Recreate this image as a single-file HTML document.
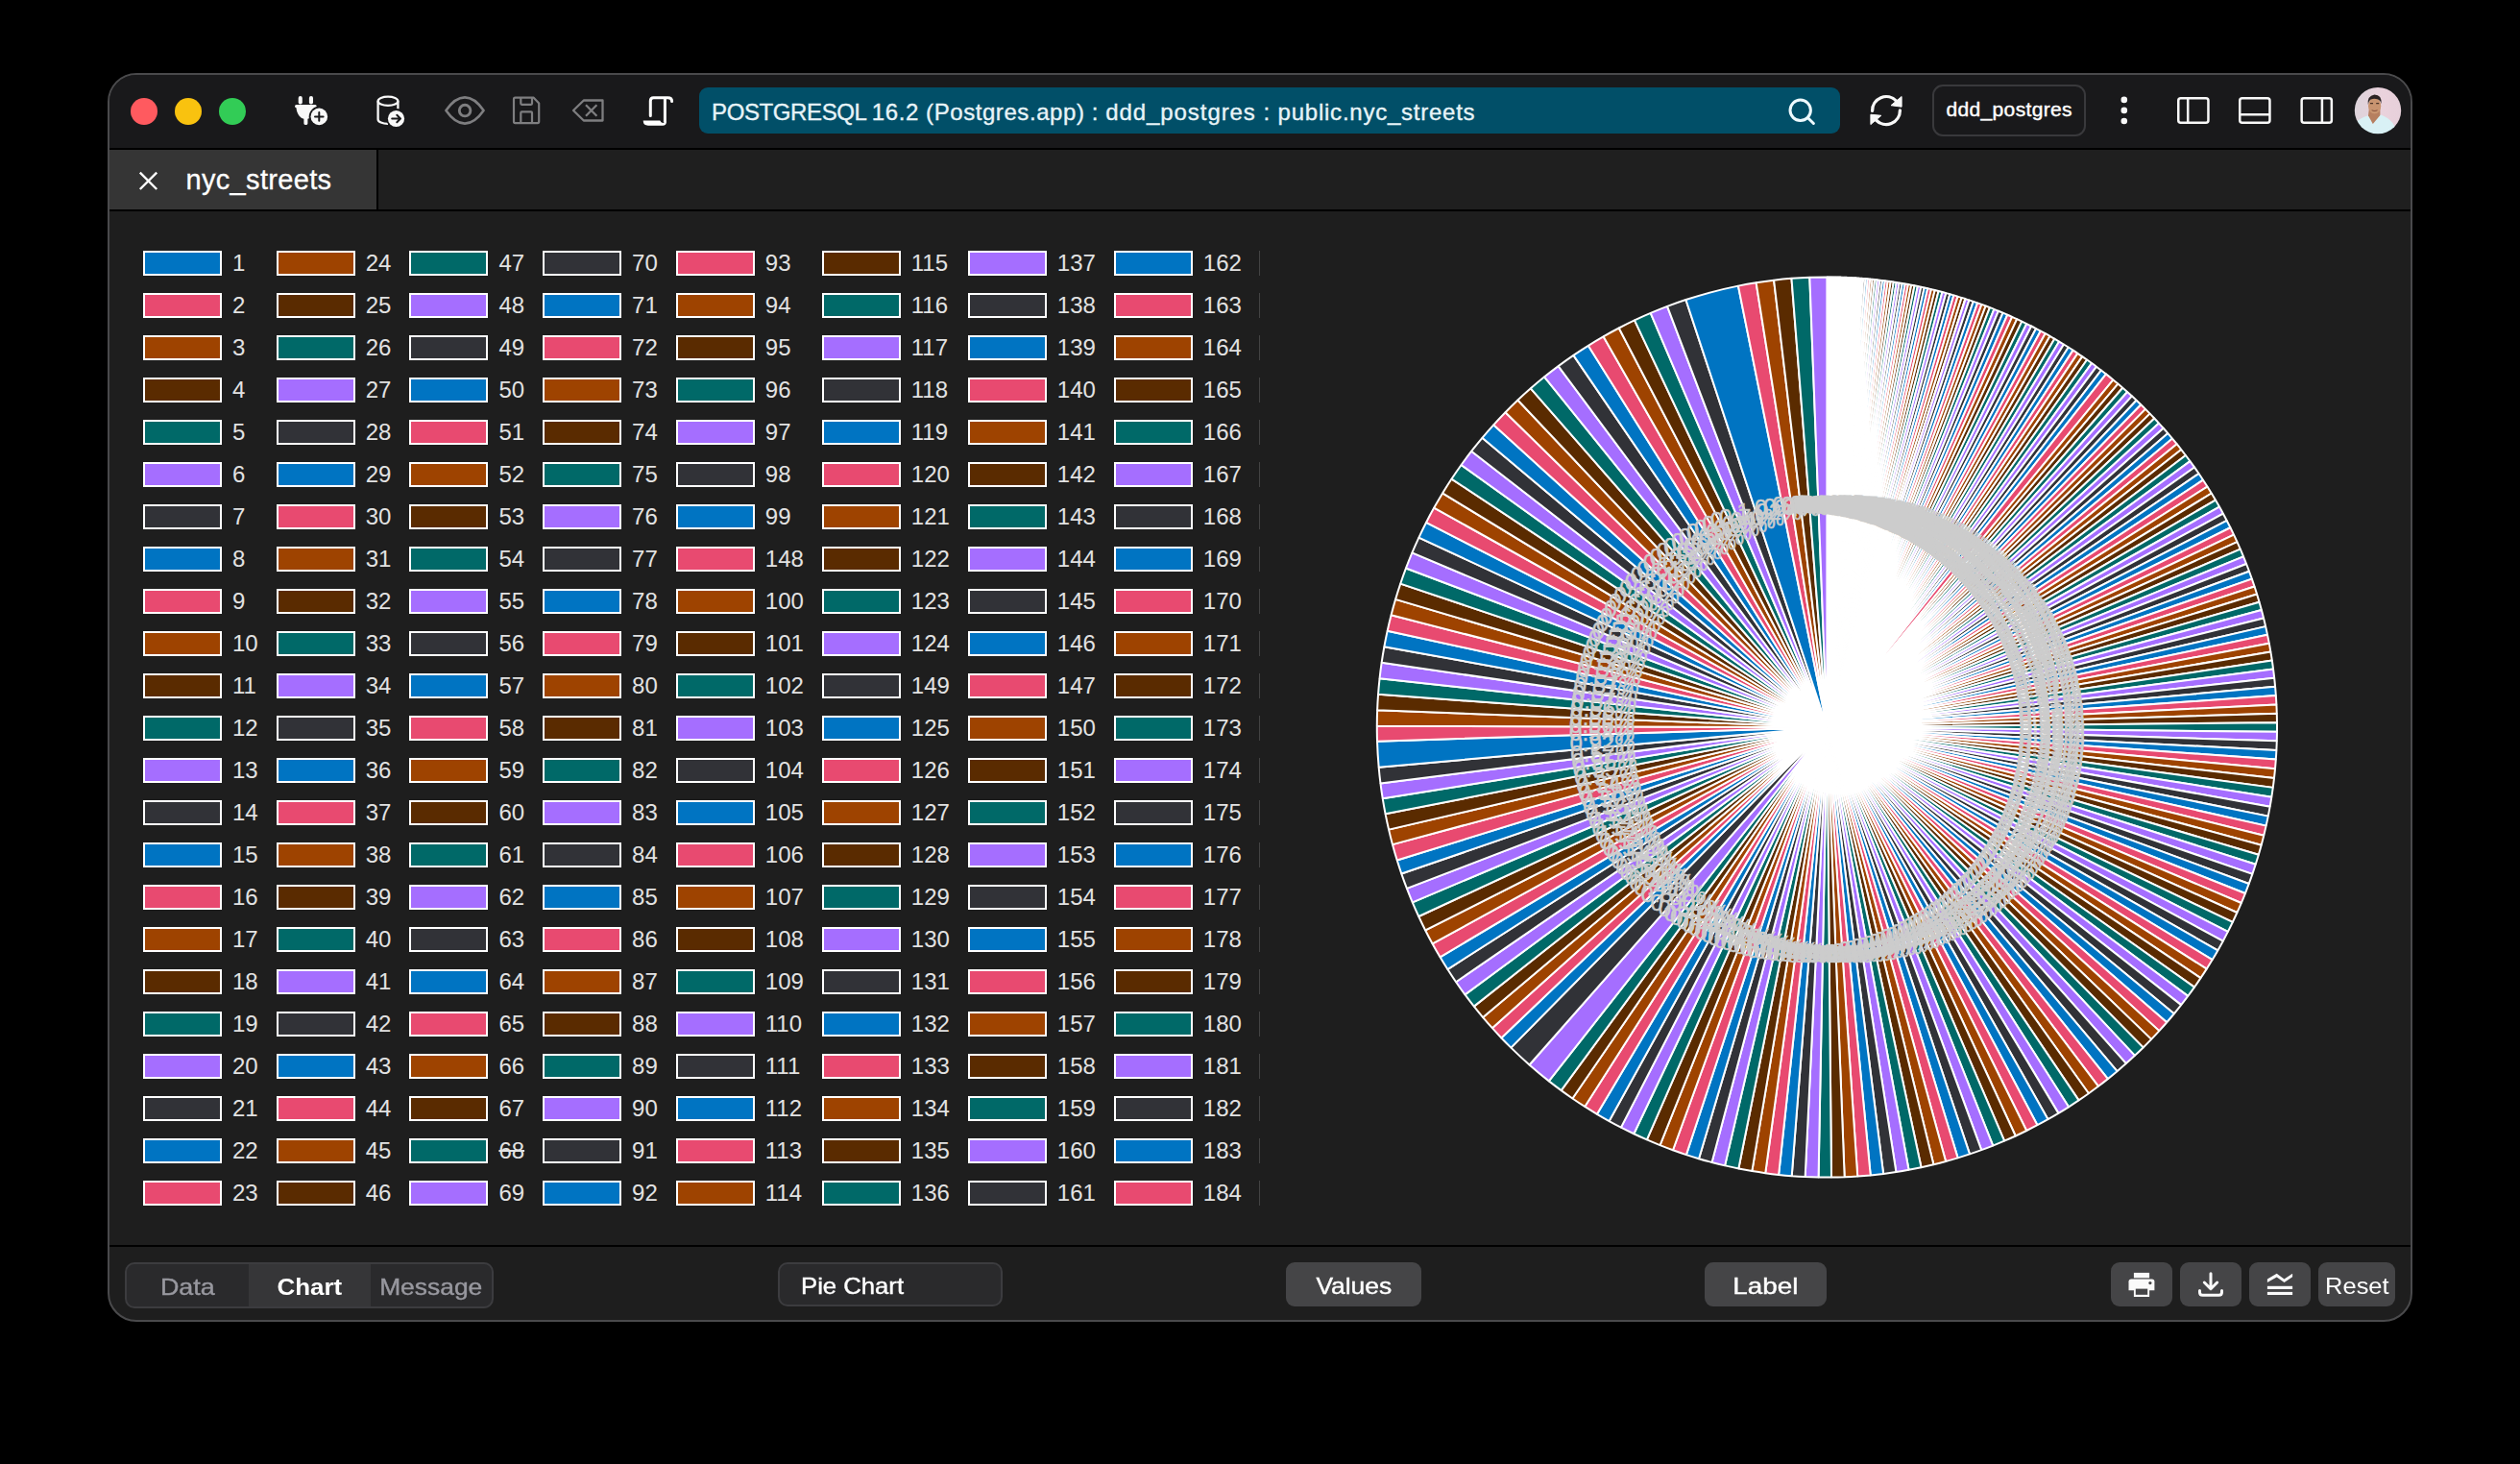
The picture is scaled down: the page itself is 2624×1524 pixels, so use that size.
<!DOCTYPE html><html><head><meta charset="utf-8"><title>nyc_streets</title><style>
.sx{display:inline-block;}

html,body{margin:0;padding:0;background:#000;}
body{width:2624px;height:1524px;position:relative;overflow:hidden;font-family:"Liberation Sans",sans-serif;}
.abs{position:absolute;}
#win{position:absolute;left:112px;top:76px;width:2396px;height:1296px;border:2px solid #4a4a4c;border-radius:30px;background:#1e1e1e;overflow:hidden;}
#tb{position:absolute;left:0;top:0;width:2396px;height:76px;background:#19191b;}
.hl{position:absolute;left:0;width:2396px;height:2px;background:#000;}
#tabbar{position:absolute;left:0;top:78px;width:2396px;height:62px;background:#1f1f1f;}
#tab{position:absolute;left:0;top:0;width:278px;height:62px;background:#353535;}
#tabdiv{position:absolute;left:278px;top:0;width:2px;height:62px;background:#000;}
.tl{position:absolute;top:24px;width:28px;height:28px;border-radius:50%;}
#addr{position:absolute;left:613.5px;top:13px;width:1188.5px;height:48px;border-radius:9px;background:#014f68;}
#addr i{font-style:normal}
#addr span{position:absolute;left:13.6px;top:0;line-height:51px;font-size:24px;color:#e8f4f8;white-space:nowrap;letter-spacing:0.57px;-webkit-text-stroke:0.35px #e8f4f8;}
#dbbtn{position:absolute;left:1898px;top:10px;width:156px;height:50px;border:2px solid #39393c;border-radius:11px;}
#dbbtn span{position:absolute;left:0.2px;width:156px;text-align:center;top:0;line-height:48px;font-size:21px;color:#fff;white-space:nowrap;letter-spacing:0.35px;-webkit-text-stroke:0.4px #fff;}
.lg{position:absolute;width:78px;height:22px;border:2px solid #fff;}
.lt{position:absolute;font-size:24px;line-height:26px;color:#e2e2e2;white-space:nowrap;}
.tick{position:absolute;left:1197.3px;width:1px;height:26px;background:#434343;}
.btn{position:absolute;top:1236px;height:46px;border-radius:9px;background:#454547;color:#fff;font-size:24px;line-height:49px;text-align:center;white-space:nowrap;}
#seg{position:absolute;left:16px;top:1236px;width:380px;height:44px;border:2px solid #3c3c3f;border-radius:10px;background:#2a2a2c;overflow:hidden;}
#seg div{position:absolute;top:0;height:44px;line-height:48px;font-size:24px;text-align:center;color:#98989f;white-space:nowrap;}
#sel{position:absolute;left:696px;top:1236px;width:230px;height:42px;border:2px solid #3c3c3f;border-radius:10px;background:#2a2a2c;}
#sel span{position:absolute;left:22px;top:0;line-height:45px;-webkit-text-stroke:0.4px #fff;transform-origin:0 50%;transform:scaleX(1.07);display:inline-block;font-size:24px;color:#fff;white-space:nowrap;}
</style></head><body>
<div id="win">
<div id="tb">
<div class="tl" style="left:22px;background:#ff5a5f"></div>
<div class="tl" style="left:68px;background:#f9c20f"></div>
<div class="tl" style="left:114px;background:#32cc56"></div>
<div id="addr"><span><i style="letter-spacing:-0.4px">POSTGRESQL </i>16.2 (Postgres.app) : <i style="letter-spacing:0.93px">ddd_postgres : </i><i style="letter-spacing:0.76px">public.nyc_streets</i></span></div>
<div id="dbbtn"><span>ddd_postgres</span></div>
<svg class="abs" style="left:0;top:0" width="2396" height="76" viewBox="114 78 2396 76" fill="none">
<g fill="#f8f8f8">
<rect x="310.7" y="99.9" width="4.1" height="8.6" rx="2"/><rect x="321.9" y="99.9" width="4.1" height="8.6" rx="2"/>
<path d="M307 110.6Q307 109 308.6 109H328.1Q329.7 109 329.7 110.6Q329.7 112 328.3 112.3C328 118.5 324.5 122.8 320.4 123.8V128.4Q320.4 130 318.4 130Q316.4 130 316.4 128.4V123.8C312.3 122.8 309 118.5 308.5 112.3Q307 112 307 110.6Z"/>
</g>
<circle cx="332.3" cy="121.4" r="10.6" fill="#19191b"/><circle cx="332.3" cy="121.4" r="8.8" fill="#f8f8f8"/>
<path d="M328 121.4H336.6M332.3 117.1V125.7" stroke="#19191b" stroke-width="2" stroke-linecap="round"/>
<g stroke="#f8f8f8" stroke-width="2.3">
<ellipse cx="404" cy="105.3" rx="10.4" ry="4.6"/>
<path d="M393.6 105.3V124.3A10.4 4.6 0 0 0 404 128.9M414.4 105.3V113.5"/>
</g>
<circle cx="412.5" cy="123.5" r="10.4" fill="#19191b"/><circle cx="412.5" cy="123.5" r="8.6" fill="#f8f8f8"/>
<path d="M408.2 123.5H416.6M413.3 119.8L417 123.5L413.3 127.2" stroke="#19191b" stroke-width="2" stroke-linecap="round" stroke-linejoin="round"/>
<g stroke="#7e7e80" stroke-width="2.6" stroke-linejoin="round">
<path d="M464.4 115C471 105.5 477 101.4 484 101.4C491 101.4 497 105.5 503.6 115C497 124.5 491 128.6 484 128.6C477 128.6 471 124.5 464.4 115Z"/>
<circle cx="484.1" cy="115.1" r="5.8" stroke-width="2.9"/>
</g>
<g stroke="#7e7e80" stroke-width="2.2" stroke-linejoin="round">
<path d="M536.5 101.7H555.7L561.2 107.4V126.6Q561.2 128.1 559.7 128.1H536.5Q535 128.1 535 126.6V103.2Q535 101.7 536.5 101.7Z"/>
<path d="M542.3 101.7V107.8Q542.3 108.8 543.3 108.8H553Q554 108.8 554 107.8V101.7M542.3 128.1V117.4Q542.3 116.4 543.3 116.4H553Q554 116.4 554 117.4V128.1"/>
</g>
<g stroke="#7e7e80" stroke-width="2.3" stroke-linejoin="round">
<path d="M597 115L607.8 104.5H627.5V125.5H607.8Z"/><path d="M610 109.3L621.4 120.7M621.4 109.3L610 120.7"/>
</g>
<g stroke="#fff" stroke-width="3" stroke-linecap="round" stroke-linejoin="round">
<path d="M677.3 120.5V105Q677.3 101.8 680.5 101.8H695.4Q699.6 101.8 699.6 105.6"/>
<path d="M692.4 102.5V126.5"/>
</g>
<path d="M669.7 125.6H687.3Q688 128 690.4 128Q692.4 128 693.9 126V126.8Q693.9 130.8 689.9 130.8H674.9Q669.7 130.8 669.7 125.6Z" fill="#fff"/>
<g stroke="#eefaff" stroke-width="3" stroke-linecap="round"><circle cx="1874.7" cy="114.8" r="10.7"/><path d="M1882.6 122.7L1888.4 128.5"/></g>
<g stroke="#f8f8f8" stroke-width="3.3" stroke-linecap="round">
<path d="M1949.6 115.4A14.4 14.4 0 0 1 1974.5 105.2"/><path d="M1978.4 115A14.4 14.4 0 0 1 1953.5 125"/>
</g>
<path d="M1980.1 100.5V111.2L1969 109.7Z M1947.9 129.6V119.2L1958.9 120.3Z" fill="#f8f8f8" stroke="#f8f8f8" stroke-width="1" stroke-linejoin="round"/>
<g fill="#f8f8f8"><circle cx="2211.8" cy="103.9" r="3.3"/><circle cx="2211.8" cy="114.9" r="3.3"/><circle cx="2211.8" cy="126" r="3.3"/></g>
<g stroke="#f8f8f8" stroke-width="2.5">
<rect x="2268.25" y="102.25" width="31.2" height="25.4" rx="2.5"/><path d="M2278.2 102.25V127.65"/>
<rect x="2332.25" y="102.25" width="31.2" height="25.4" rx="2.5"/><path d="M2332.25 119.2H2363.45"/>
<rect x="2396.65" y="102.25" width="31.2" height="25.4" rx="2.5"/><path d="M2417.9 102.25V127.65"/>
</g>
<defs><clipPath id="av"><circle cx="2476" cy="115.1" r="24.2"/></clipPath>
<linearGradient id="avbg" x1="0" y1="0" x2="1" y2="0"><stop offset="0" stop-color="#dcd3da"/><stop offset="0.6" stop-color="#ead2dc"/><stop offset="1" stop-color="#e6d0da"/></linearGradient></defs>
<filter id="avb" x="-10%" y="-10%" width="120%" height="120%"><feGaussianBlur stdDeviation="0.45"/></filter>
<g clip-path="url(#av)"><g filter="url(#avb)">
<rect x="2450" y="89" width="52" height="52" fill="url(#avbg)"/>
<path d="M2451 141V129Q2457 122.8 2466 120.2L2470.8 129L2477 118.8Q2486.5 122 2491.5 128Q2494.5 133 2495.5 141Z" fill="#d9f1f5"/>
<path d="M2467 112H2478.4V120L2470.8 129L2466 120.2Z" fill="#b67f60"/>
<ellipse cx="2472.6" cy="110.2" rx="6.6" ry="8.4" fill="#c8946f"/>
<path d="M2465.8 109Q2464.6 100 2472.4 98.6Q2480.4 98.8 2479.7 108.5Q2478.8 104 2475.5 103.2Q2472 102.2 2468.8 103.4Q2466.6 104.6 2465.8 109Z" fill="#2a2221"/>
<path d="M2468 107.6H2471M2474.2 107.6H2477.2" stroke="#4a3226" stroke-width="1.3"/>
<path d="M2469.6 114.6Q2472.6 116.4 2475.6 114.6" stroke="#8a5540" stroke-width="1.1" fill="none"/>
</g></g>
</svg>
</div>
<div class="hl" style="top:76px"></div>
<div id="tabbar"><div id="tab"></div><div id="tabdiv"></div>
<svg class="abs" style="left:0;top:0" width="278" height="62" viewBox="0 0 278 62"><path d="M31.8 23.6L49.2 41M49.2 23.6L31.8 41" stroke="#fff" stroke-width="2.4" fill="none"/></svg>
<span class="abs" id="tabtxt" style="left:79.5px;top:0;line-height:63px;font-size:29px;color:#fff;white-space:nowrap;letter-spacing:0.33px;-webkit-text-stroke:0.3px #fff">nyc_streets</span>
</div>
<div class="hl" style="top:140px"></div>
<div class="lg" style="left:35.0px;top:183px;background:#0074c2"></div>
<div class="lt" style="left:128.0px;top:183px">1</div>
<div class="lg" style="left:35.0px;top:227px;background:#e84a70"></div>
<div class="lt" style="left:128.0px;top:227px">2</div>
<div class="lg" style="left:35.0px;top:271px;background:#9e4300"></div>
<div class="lt" style="left:128.0px;top:271px">3</div>
<div class="lg" style="left:35.0px;top:315px;background:#5a2b00"></div>
<div class="lt" style="left:128.0px;top:315px">4</div>
<div class="lg" style="left:35.0px;top:359px;background:#006968"></div>
<div class="lt" style="left:128.0px;top:359px">5</div>
<div class="lg" style="left:35.0px;top:403px;background:#a56eff"></div>
<div class="lt" style="left:128.0px;top:403px">6</div>
<div class="lg" style="left:35.0px;top:447px;background:#313237"></div>
<div class="lt" style="left:128.0px;top:447px">7</div>
<div class="lg" style="left:35.0px;top:491px;background:#0074c2"></div>
<div class="lt" style="left:128.0px;top:491px">8</div>
<div class="lg" style="left:35.0px;top:535px;background:#e84a70"></div>
<div class="lt" style="left:128.0px;top:535px">9</div>
<div class="lg" style="left:35.0px;top:579px;background:#9e4300"></div>
<div class="lt" style="left:128.0px;top:579px">10</div>
<div class="lg" style="left:35.0px;top:623px;background:#5a2b00"></div>
<div class="lt" style="left:128.0px;top:623px">11</div>
<div class="lg" style="left:35.0px;top:667px;background:#006968"></div>
<div class="lt" style="left:128.0px;top:667px">12</div>
<div class="lg" style="left:35.0px;top:711px;background:#a56eff"></div>
<div class="lt" style="left:128.0px;top:711px">13</div>
<div class="lg" style="left:35.0px;top:755px;background:#313237"></div>
<div class="lt" style="left:128.0px;top:755px">14</div>
<div class="lg" style="left:35.0px;top:799px;background:#0074c2"></div>
<div class="lt" style="left:128.0px;top:799px">15</div>
<div class="lg" style="left:35.0px;top:843px;background:#e84a70"></div>
<div class="lt" style="left:128.0px;top:843px">16</div>
<div class="lg" style="left:35.0px;top:887px;background:#9e4300"></div>
<div class="lt" style="left:128.0px;top:887px">17</div>
<div class="lg" style="left:35.0px;top:931px;background:#5a2b00"></div>
<div class="lt" style="left:128.0px;top:931px">18</div>
<div class="lg" style="left:35.0px;top:975px;background:#006968"></div>
<div class="lt" style="left:128.0px;top:975px">19</div>
<div class="lg" style="left:35.0px;top:1019px;background:#a56eff"></div>
<div class="lt" style="left:128.0px;top:1019px">20</div>
<div class="lg" style="left:35.0px;top:1063px;background:#313237"></div>
<div class="lt" style="left:128.0px;top:1063px">21</div>
<div class="lg" style="left:35.0px;top:1107px;background:#0074c2"></div>
<div class="lt" style="left:128.0px;top:1107px">22</div>
<div class="lg" style="left:35.0px;top:1151px;background:#e84a70"></div>
<div class="lt" style="left:128.0px;top:1151px">23</div>
<div class="lg" style="left:173.7px;top:183px;background:#9e4300"></div>
<div class="lt" style="left:266.7px;top:183px">24</div>
<div class="lg" style="left:173.7px;top:227px;background:#5a2b00"></div>
<div class="lt" style="left:266.7px;top:227px">25</div>
<div class="lg" style="left:173.7px;top:271px;background:#006968"></div>
<div class="lt" style="left:266.7px;top:271px">26</div>
<div class="lg" style="left:173.7px;top:315px;background:#a56eff"></div>
<div class="lt" style="left:266.7px;top:315px">27</div>
<div class="lg" style="left:173.7px;top:359px;background:#313237"></div>
<div class="lt" style="left:266.7px;top:359px">28</div>
<div class="lg" style="left:173.7px;top:403px;background:#0074c2"></div>
<div class="lt" style="left:266.7px;top:403px">29</div>
<div class="lg" style="left:173.7px;top:447px;background:#e84a70"></div>
<div class="lt" style="left:266.7px;top:447px">30</div>
<div class="lg" style="left:173.7px;top:491px;background:#9e4300"></div>
<div class="lt" style="left:266.7px;top:491px">31</div>
<div class="lg" style="left:173.7px;top:535px;background:#5a2b00"></div>
<div class="lt" style="left:266.7px;top:535px">32</div>
<div class="lg" style="left:173.7px;top:579px;background:#006968"></div>
<div class="lt" style="left:266.7px;top:579px">33</div>
<div class="lg" style="left:173.7px;top:623px;background:#a56eff"></div>
<div class="lt" style="left:266.7px;top:623px">34</div>
<div class="lg" style="left:173.7px;top:667px;background:#313237"></div>
<div class="lt" style="left:266.7px;top:667px">35</div>
<div class="lg" style="left:173.7px;top:711px;background:#0074c2"></div>
<div class="lt" style="left:266.7px;top:711px">36</div>
<div class="lg" style="left:173.7px;top:755px;background:#e84a70"></div>
<div class="lt" style="left:266.7px;top:755px">37</div>
<div class="lg" style="left:173.7px;top:799px;background:#9e4300"></div>
<div class="lt" style="left:266.7px;top:799px">38</div>
<div class="lg" style="left:173.7px;top:843px;background:#5a2b00"></div>
<div class="lt" style="left:266.7px;top:843px">39</div>
<div class="lg" style="left:173.7px;top:887px;background:#006968"></div>
<div class="lt" style="left:266.7px;top:887px">40</div>
<div class="lg" style="left:173.7px;top:931px;background:#a56eff"></div>
<div class="lt" style="left:266.7px;top:931px">41</div>
<div class="lg" style="left:173.7px;top:975px;background:#313237"></div>
<div class="lt" style="left:266.7px;top:975px">42</div>
<div class="lg" style="left:173.7px;top:1019px;background:#0074c2"></div>
<div class="lt" style="left:266.7px;top:1019px">43</div>
<div class="lg" style="left:173.7px;top:1063px;background:#e84a70"></div>
<div class="lt" style="left:266.7px;top:1063px">44</div>
<div class="lg" style="left:173.7px;top:1107px;background:#9e4300"></div>
<div class="lt" style="left:266.7px;top:1107px">45</div>
<div class="lg" style="left:173.7px;top:1151px;background:#5a2b00"></div>
<div class="lt" style="left:266.7px;top:1151px">46</div>
<div class="lg" style="left:312.4px;top:183px;background:#006968"></div>
<div class="lt" style="left:405.4px;top:183px">47</div>
<div class="lg" style="left:312.4px;top:227px;background:#a56eff"></div>
<div class="lt" style="left:405.4px;top:227px">48</div>
<div class="lg" style="left:312.4px;top:271px;background:#313237"></div>
<div class="lt" style="left:405.4px;top:271px">49</div>
<div class="lg" style="left:312.4px;top:315px;background:#0074c2"></div>
<div class="lt" style="left:405.4px;top:315px">50</div>
<div class="lg" style="left:312.4px;top:359px;background:#e84a70"></div>
<div class="lt" style="left:405.4px;top:359px">51</div>
<div class="lg" style="left:312.4px;top:403px;background:#9e4300"></div>
<div class="lt" style="left:405.4px;top:403px">52</div>
<div class="lg" style="left:312.4px;top:447px;background:#5a2b00"></div>
<div class="lt" style="left:405.4px;top:447px">53</div>
<div class="lg" style="left:312.4px;top:491px;background:#006968"></div>
<div class="lt" style="left:405.4px;top:491px">54</div>
<div class="lg" style="left:312.4px;top:535px;background:#a56eff"></div>
<div class="lt" style="left:405.4px;top:535px">55</div>
<div class="lg" style="left:312.4px;top:579px;background:#313237"></div>
<div class="lt" style="left:405.4px;top:579px">56</div>
<div class="lg" style="left:312.4px;top:623px;background:#0074c2"></div>
<div class="lt" style="left:405.4px;top:623px">57</div>
<div class="lg" style="left:312.4px;top:667px;background:#e84a70"></div>
<div class="lt" style="left:405.4px;top:667px">58</div>
<div class="lg" style="left:312.4px;top:711px;background:#9e4300"></div>
<div class="lt" style="left:405.4px;top:711px">59</div>
<div class="lg" style="left:312.4px;top:755px;background:#5a2b00"></div>
<div class="lt" style="left:405.4px;top:755px">60</div>
<div class="lg" style="left:312.4px;top:799px;background:#006968"></div>
<div class="lt" style="left:405.4px;top:799px">61</div>
<div class="lg" style="left:312.4px;top:843px;background:#a56eff"></div>
<div class="lt" style="left:405.4px;top:843px">62</div>
<div class="lg" style="left:312.4px;top:887px;background:#313237"></div>
<div class="lt" style="left:405.4px;top:887px">63</div>
<div class="lg" style="left:312.4px;top:931px;background:#0074c2"></div>
<div class="lt" style="left:405.4px;top:931px">64</div>
<div class="lg" style="left:312.4px;top:975px;background:#e84a70"></div>
<div class="lt" style="left:405.4px;top:975px">65</div>
<div class="lg" style="left:312.4px;top:1019px;background:#9e4300"></div>
<div class="lt" style="left:405.4px;top:1019px">66</div>
<div class="lg" style="left:312.4px;top:1063px;background:#5a2b00"></div>
<div class="lt" style="left:405.4px;top:1063px">67</div>
<div class="lg" style="left:312.4px;top:1107px;background:#006968"></div>
<div class="lt" style="left:405.4px;top:1107px;text-decoration:line-through">68</div>
<div class="lg" style="left:312.4px;top:1151px;background:#a56eff"></div>
<div class="lt" style="left:405.4px;top:1151px">69</div>
<div class="lg" style="left:451.1px;top:183px;background:#313237"></div>
<div class="lt" style="left:544.1px;top:183px">70</div>
<div class="lg" style="left:451.1px;top:227px;background:#0074c2"></div>
<div class="lt" style="left:544.1px;top:227px">71</div>
<div class="lg" style="left:451.1px;top:271px;background:#e84a70"></div>
<div class="lt" style="left:544.1px;top:271px">72</div>
<div class="lg" style="left:451.1px;top:315px;background:#9e4300"></div>
<div class="lt" style="left:544.1px;top:315px">73</div>
<div class="lg" style="left:451.1px;top:359px;background:#5a2b00"></div>
<div class="lt" style="left:544.1px;top:359px">74</div>
<div class="lg" style="left:451.1px;top:403px;background:#006968"></div>
<div class="lt" style="left:544.1px;top:403px">75</div>
<div class="lg" style="left:451.1px;top:447px;background:#a56eff"></div>
<div class="lt" style="left:544.1px;top:447px">76</div>
<div class="lg" style="left:451.1px;top:491px;background:#313237"></div>
<div class="lt" style="left:544.1px;top:491px">77</div>
<div class="lg" style="left:451.1px;top:535px;background:#0074c2"></div>
<div class="lt" style="left:544.1px;top:535px">78</div>
<div class="lg" style="left:451.1px;top:579px;background:#e84a70"></div>
<div class="lt" style="left:544.1px;top:579px">79</div>
<div class="lg" style="left:451.1px;top:623px;background:#9e4300"></div>
<div class="lt" style="left:544.1px;top:623px">80</div>
<div class="lg" style="left:451.1px;top:667px;background:#5a2b00"></div>
<div class="lt" style="left:544.1px;top:667px">81</div>
<div class="lg" style="left:451.1px;top:711px;background:#006968"></div>
<div class="lt" style="left:544.1px;top:711px">82</div>
<div class="lg" style="left:451.1px;top:755px;background:#a56eff"></div>
<div class="lt" style="left:544.1px;top:755px">83</div>
<div class="lg" style="left:451.1px;top:799px;background:#313237"></div>
<div class="lt" style="left:544.1px;top:799px">84</div>
<div class="lg" style="left:451.1px;top:843px;background:#0074c2"></div>
<div class="lt" style="left:544.1px;top:843px">85</div>
<div class="lg" style="left:451.1px;top:887px;background:#e84a70"></div>
<div class="lt" style="left:544.1px;top:887px">86</div>
<div class="lg" style="left:451.1px;top:931px;background:#9e4300"></div>
<div class="lt" style="left:544.1px;top:931px">87</div>
<div class="lg" style="left:451.1px;top:975px;background:#5a2b00"></div>
<div class="lt" style="left:544.1px;top:975px">88</div>
<div class="lg" style="left:451.1px;top:1019px;background:#006968"></div>
<div class="lt" style="left:544.1px;top:1019px">89</div>
<div class="lg" style="left:451.1px;top:1063px;background:#a56eff"></div>
<div class="lt" style="left:544.1px;top:1063px">90</div>
<div class="lg" style="left:451.1px;top:1107px;background:#313237"></div>
<div class="lt" style="left:544.1px;top:1107px">91</div>
<div class="lg" style="left:451.1px;top:1151px;background:#0074c2"></div>
<div class="lt" style="left:544.1px;top:1151px">92</div>
<div class="lg" style="left:589.8px;top:183px;background:#e84a70"></div>
<div class="lt" style="left:682.8px;top:183px">93</div>
<div class="lg" style="left:589.8px;top:227px;background:#9e4300"></div>
<div class="lt" style="left:682.8px;top:227px">94</div>
<div class="lg" style="left:589.8px;top:271px;background:#5a2b00"></div>
<div class="lt" style="left:682.8px;top:271px">95</div>
<div class="lg" style="left:589.8px;top:315px;background:#006968"></div>
<div class="lt" style="left:682.8px;top:315px">96</div>
<div class="lg" style="left:589.8px;top:359px;background:#a56eff"></div>
<div class="lt" style="left:682.8px;top:359px">97</div>
<div class="lg" style="left:589.8px;top:403px;background:#313237"></div>
<div class="lt" style="left:682.8px;top:403px">98</div>
<div class="lg" style="left:589.8px;top:447px;background:#0074c2"></div>
<div class="lt" style="left:682.8px;top:447px">99</div>
<div class="lg" style="left:589.8px;top:491px;background:#e84a70"></div>
<div class="lt" style="left:682.8px;top:491px">148</div>
<div class="lg" style="left:589.8px;top:535px;background:#9e4300"></div>
<div class="lt" style="left:682.8px;top:535px">100</div>
<div class="lg" style="left:589.8px;top:579px;background:#5a2b00"></div>
<div class="lt" style="left:682.8px;top:579px">101</div>
<div class="lg" style="left:589.8px;top:623px;background:#006968"></div>
<div class="lt" style="left:682.8px;top:623px">102</div>
<div class="lg" style="left:589.8px;top:667px;background:#a56eff"></div>
<div class="lt" style="left:682.8px;top:667px">103</div>
<div class="lg" style="left:589.8px;top:711px;background:#313237"></div>
<div class="lt" style="left:682.8px;top:711px">104</div>
<div class="lg" style="left:589.8px;top:755px;background:#0074c2"></div>
<div class="lt" style="left:682.8px;top:755px">105</div>
<div class="lg" style="left:589.8px;top:799px;background:#e84a70"></div>
<div class="lt" style="left:682.8px;top:799px">106</div>
<div class="lg" style="left:589.8px;top:843px;background:#9e4300"></div>
<div class="lt" style="left:682.8px;top:843px">107</div>
<div class="lg" style="left:589.8px;top:887px;background:#5a2b00"></div>
<div class="lt" style="left:682.8px;top:887px">108</div>
<div class="lg" style="left:589.8px;top:931px;background:#006968"></div>
<div class="lt" style="left:682.8px;top:931px">109</div>
<div class="lg" style="left:589.8px;top:975px;background:#a56eff"></div>
<div class="lt" style="left:682.8px;top:975px">110</div>
<div class="lg" style="left:589.8px;top:1019px;background:#313237"></div>
<div class="lt" style="left:682.8px;top:1019px">111</div>
<div class="lg" style="left:589.8px;top:1063px;background:#0074c2"></div>
<div class="lt" style="left:682.8px;top:1063px">112</div>
<div class="lg" style="left:589.8px;top:1107px;background:#e84a70"></div>
<div class="lt" style="left:682.8px;top:1107px">113</div>
<div class="lg" style="left:589.8px;top:1151px;background:#9e4300"></div>
<div class="lt" style="left:682.8px;top:1151px">114</div>
<div class="lg" style="left:741.8px;top:183px;background:#5a2b00"></div>
<div class="lt" style="left:834.8px;top:183px">115</div>
<div class="lg" style="left:741.8px;top:227px;background:#006968"></div>
<div class="lt" style="left:834.8px;top:227px">116</div>
<div class="lg" style="left:741.8px;top:271px;background:#a56eff"></div>
<div class="lt" style="left:834.8px;top:271px">117</div>
<div class="lg" style="left:741.8px;top:315px;background:#313237"></div>
<div class="lt" style="left:834.8px;top:315px">118</div>
<div class="lg" style="left:741.8px;top:359px;background:#0074c2"></div>
<div class="lt" style="left:834.8px;top:359px">119</div>
<div class="lg" style="left:741.8px;top:403px;background:#e84a70"></div>
<div class="lt" style="left:834.8px;top:403px">120</div>
<div class="lg" style="left:741.8px;top:447px;background:#9e4300"></div>
<div class="lt" style="left:834.8px;top:447px">121</div>
<div class="lg" style="left:741.8px;top:491px;background:#5a2b00"></div>
<div class="lt" style="left:834.8px;top:491px">122</div>
<div class="lg" style="left:741.8px;top:535px;background:#006968"></div>
<div class="lt" style="left:834.8px;top:535px">123</div>
<div class="lg" style="left:741.8px;top:579px;background:#a56eff"></div>
<div class="lt" style="left:834.8px;top:579px">124</div>
<div class="lg" style="left:741.8px;top:623px;background:#313237"></div>
<div class="lt" style="left:834.8px;top:623px">149</div>
<div class="lg" style="left:741.8px;top:667px;background:#0074c2"></div>
<div class="lt" style="left:834.8px;top:667px">125</div>
<div class="lg" style="left:741.8px;top:711px;background:#e84a70"></div>
<div class="lt" style="left:834.8px;top:711px">126</div>
<div class="lg" style="left:741.8px;top:755px;background:#9e4300"></div>
<div class="lt" style="left:834.8px;top:755px">127</div>
<div class="lg" style="left:741.8px;top:799px;background:#5a2b00"></div>
<div class="lt" style="left:834.8px;top:799px">128</div>
<div class="lg" style="left:741.8px;top:843px;background:#006968"></div>
<div class="lt" style="left:834.8px;top:843px">129</div>
<div class="lg" style="left:741.8px;top:887px;background:#a56eff"></div>
<div class="lt" style="left:834.8px;top:887px">130</div>
<div class="lg" style="left:741.8px;top:931px;background:#313237"></div>
<div class="lt" style="left:834.8px;top:931px">131</div>
<div class="lg" style="left:741.8px;top:975px;background:#0074c2"></div>
<div class="lt" style="left:834.8px;top:975px">132</div>
<div class="lg" style="left:741.8px;top:1019px;background:#e84a70"></div>
<div class="lt" style="left:834.8px;top:1019px">133</div>
<div class="lg" style="left:741.8px;top:1063px;background:#9e4300"></div>
<div class="lt" style="left:834.8px;top:1063px">134</div>
<div class="lg" style="left:741.8px;top:1107px;background:#5a2b00"></div>
<div class="lt" style="left:834.8px;top:1107px">135</div>
<div class="lg" style="left:741.8px;top:1151px;background:#006968"></div>
<div class="lt" style="left:834.8px;top:1151px">136</div>
<div class="lg" style="left:893.8px;top:183px;background:#a56eff"></div>
<div class="lt" style="left:986.8px;top:183px">137</div>
<div class="lg" style="left:893.8px;top:227px;background:#313237"></div>
<div class="lt" style="left:986.8px;top:227px">138</div>
<div class="lg" style="left:893.8px;top:271px;background:#0074c2"></div>
<div class="lt" style="left:986.8px;top:271px">139</div>
<div class="lg" style="left:893.8px;top:315px;background:#e84a70"></div>
<div class="lt" style="left:986.8px;top:315px">140</div>
<div class="lg" style="left:893.8px;top:359px;background:#9e4300"></div>
<div class="lt" style="left:986.8px;top:359px">141</div>
<div class="lg" style="left:893.8px;top:403px;background:#5a2b00"></div>
<div class="lt" style="left:986.8px;top:403px">142</div>
<div class="lg" style="left:893.8px;top:447px;background:#006968"></div>
<div class="lt" style="left:986.8px;top:447px">143</div>
<div class="lg" style="left:893.8px;top:491px;background:#a56eff"></div>
<div class="lt" style="left:986.8px;top:491px">144</div>
<div class="lg" style="left:893.8px;top:535px;background:#313237"></div>
<div class="lt" style="left:986.8px;top:535px">145</div>
<div class="lg" style="left:893.8px;top:579px;background:#0074c2"></div>
<div class="lt" style="left:986.8px;top:579px">146</div>
<div class="lg" style="left:893.8px;top:623px;background:#e84a70"></div>
<div class="lt" style="left:986.8px;top:623px">147</div>
<div class="lg" style="left:893.8px;top:667px;background:#9e4300"></div>
<div class="lt" style="left:986.8px;top:667px">150</div>
<div class="lg" style="left:893.8px;top:711px;background:#5a2b00"></div>
<div class="lt" style="left:986.8px;top:711px">151</div>
<div class="lg" style="left:893.8px;top:755px;background:#006968"></div>
<div class="lt" style="left:986.8px;top:755px">152</div>
<div class="lg" style="left:893.8px;top:799px;background:#a56eff"></div>
<div class="lt" style="left:986.8px;top:799px">153</div>
<div class="lg" style="left:893.8px;top:843px;background:#313237"></div>
<div class="lt" style="left:986.8px;top:843px">154</div>
<div class="lg" style="left:893.8px;top:887px;background:#0074c2"></div>
<div class="lt" style="left:986.8px;top:887px">155</div>
<div class="lg" style="left:893.8px;top:931px;background:#e84a70"></div>
<div class="lt" style="left:986.8px;top:931px">156</div>
<div class="lg" style="left:893.8px;top:975px;background:#9e4300"></div>
<div class="lt" style="left:986.8px;top:975px">157</div>
<div class="lg" style="left:893.8px;top:1019px;background:#5a2b00"></div>
<div class="lt" style="left:986.8px;top:1019px">158</div>
<div class="lg" style="left:893.8px;top:1063px;background:#006968"></div>
<div class="lt" style="left:986.8px;top:1063px">159</div>
<div class="lg" style="left:893.8px;top:1107px;background:#a56eff"></div>
<div class="lt" style="left:986.8px;top:1107px">160</div>
<div class="lg" style="left:893.8px;top:1151px;background:#313237"></div>
<div class="lt" style="left:986.8px;top:1151px">161</div>
<div class="lg" style="left:1045.8px;top:183px;background:#0074c2"></div>
<div class="lt" style="left:1138.8px;top:183px">162</div>
<div class="lg" style="left:1045.8px;top:227px;background:#e84a70"></div>
<div class="lt" style="left:1138.8px;top:227px">163</div>
<div class="lg" style="left:1045.8px;top:271px;background:#9e4300"></div>
<div class="lt" style="left:1138.8px;top:271px">164</div>
<div class="lg" style="left:1045.8px;top:315px;background:#5a2b00"></div>
<div class="lt" style="left:1138.8px;top:315px">165</div>
<div class="lg" style="left:1045.8px;top:359px;background:#006968"></div>
<div class="lt" style="left:1138.8px;top:359px">166</div>
<div class="lg" style="left:1045.8px;top:403px;background:#a56eff"></div>
<div class="lt" style="left:1138.8px;top:403px">167</div>
<div class="lg" style="left:1045.8px;top:447px;background:#313237"></div>
<div class="lt" style="left:1138.8px;top:447px">168</div>
<div class="lg" style="left:1045.8px;top:491px;background:#0074c2"></div>
<div class="lt" style="left:1138.8px;top:491px">169</div>
<div class="lg" style="left:1045.8px;top:535px;background:#e84a70"></div>
<div class="lt" style="left:1138.8px;top:535px">170</div>
<div class="lg" style="left:1045.8px;top:579px;background:#9e4300"></div>
<div class="lt" style="left:1138.8px;top:579px">171</div>
<div class="lg" style="left:1045.8px;top:623px;background:#5a2b00"></div>
<div class="lt" style="left:1138.8px;top:623px">172</div>
<div class="lg" style="left:1045.8px;top:667px;background:#006968"></div>
<div class="lt" style="left:1138.8px;top:667px">173</div>
<div class="lg" style="left:1045.8px;top:711px;background:#a56eff"></div>
<div class="lt" style="left:1138.8px;top:711px">174</div>
<div class="lg" style="left:1045.8px;top:755px;background:#313237"></div>
<div class="lt" style="left:1138.8px;top:755px">175</div>
<div class="lg" style="left:1045.8px;top:799px;background:#0074c2"></div>
<div class="lt" style="left:1138.8px;top:799px">176</div>
<div class="lg" style="left:1045.8px;top:843px;background:#e84a70"></div>
<div class="lt" style="left:1138.8px;top:843px">177</div>
<div class="lg" style="left:1045.8px;top:887px;background:#9e4300"></div>
<div class="lt" style="left:1138.8px;top:887px">178</div>
<div class="lg" style="left:1045.8px;top:931px;background:#5a2b00"></div>
<div class="lt" style="left:1138.8px;top:931px">179</div>
<div class="lg" style="left:1045.8px;top:975px;background:#006968"></div>
<div class="lt" style="left:1138.8px;top:975px">180</div>
<div class="lg" style="left:1045.8px;top:1019px;background:#a56eff"></div>
<div class="lt" style="left:1138.8px;top:1019px">181</div>
<div class="lg" style="left:1045.8px;top:1063px;background:#313237"></div>
<div class="lt" style="left:1138.8px;top:1063px">182</div>
<div class="lg" style="left:1045.8px;top:1107px;background:#0074c2"></div>
<div class="lt" style="left:1138.8px;top:1107px">183</div>
<div class="lg" style="left:1045.8px;top:1151px;background:#e84a70"></div>
<div class="lt" style="left:1138.8px;top:1151px">184</div>
<div class="tick" style="top:183px"></div>
<div class="tick" style="top:227px"></div>
<div class="tick" style="top:271px"></div>
<div class="tick" style="top:315px"></div>
<div class="tick" style="top:359px"></div>
<div class="tick" style="top:403px"></div>
<div class="tick" style="top:447px"></div>
<div class="tick" style="top:491px"></div>
<div class="tick" style="top:535px"></div>
<div class="tick" style="top:579px"></div>
<div class="tick" style="top:623px"></div>
<div class="tick" style="top:667px"></div>
<div class="tick" style="top:711px"></div>
<div class="tick" style="top:755px"></div>
<div class="tick" style="top:799px"></div>
<div class="tick" style="top:843px"></div>
<div class="tick" style="top:887px"></div>
<div class="tick" style="top:931px"></div>
<div class="tick" style="top:975px"></div>
<div class="tick" style="top:1019px"></div>
<div class="tick" style="top:1063px"></div>
<div class="tick" style="top:1107px"></div>
<div class="tick" style="top:1151px"></div>
<svg class="abs" style="left:1286px;top:182px" width="1000" height="1000" viewBox="1400 260 1000 1000">
<g stroke="#fff" stroke-width="2" stroke-linejoin="bevel">
<path fill="#0074c2" d="M1902.4 757.0L1902.40 288.40A468.6 468.6 0 0 1 1902.88 288.40Z"/>
<path fill="#e84a70" d="M1902.4 757.0L1902.88 288.40A468.6 468.6 0 0 1 1903.42 288.40Z"/>
<path fill="#9e4300" d="M1902.4 757.0L1903.42 288.40A468.6 468.6 0 0 1 1904.01 288.40Z"/>
<path fill="#5a2b00" d="M1902.4 757.0L1904.01 288.40A468.6 468.6 0 0 1 1904.67 288.41Z"/>
<path fill="#006968" d="M1902.4 757.0L1904.67 288.41A468.6 468.6 0 0 1 1905.37 288.41Z"/>
<path fill="#a56eff" d="M1902.4 757.0L1905.37 288.41A468.6 468.6 0 0 1 1906.11 288.41Z"/>
<path fill="#313237" d="M1902.4 757.0L1906.11 288.41A468.6 468.6 0 0 1 1906.89 288.42Z"/>
<path fill="#0074c2" d="M1902.4 757.0L1906.89 288.42A468.6 468.6 0 0 1 1907.77 288.43Z"/>
<path fill="#e84a70" d="M1902.4 757.0L1907.77 288.43A468.6 468.6 0 0 1 1908.73 288.44Z"/>
<path fill="#9e4300" d="M1902.4 757.0L1908.73 288.44A468.6 468.6 0 0 1 1909.76 288.46Z"/>
<path fill="#5a2b00" d="M1902.4 757.0L1909.76 288.46A468.6 468.6 0 0 1 1910.84 288.48Z"/>
<path fill="#006968" d="M1902.4 757.0L1910.84 288.48A468.6 468.6 0 0 1 1911.93 288.50Z"/>
<path fill="#a56eff" d="M1902.4 757.0L1911.93 288.50A468.6 468.6 0 0 1 1913.03 288.52Z"/>
<path fill="#313237" d="M1902.4 757.0L1913.03 288.52A468.6 468.6 0 0 1 1914.15 288.55Z"/>
<path fill="#0074c2" d="M1902.4 757.0L1914.15 288.55A468.6 468.6 0 0 1 1915.31 288.58Z"/>
<path fill="#e84a70" d="M1902.4 757.0L1915.31 288.58A468.6 468.6 0 0 1 1916.50 288.61Z"/>
<path fill="#9e4300" d="M1902.4 757.0L1916.50 288.61A468.6 468.6 0 0 1 1917.72 288.65Z"/>
<path fill="#5a2b00" d="M1902.4 757.0L1917.72 288.65A468.6 468.6 0 0 1 1918.95 288.69Z"/>
<path fill="#006968" d="M1902.4 757.0L1918.95 288.69A468.6 468.6 0 0 1 1920.18 288.74Z"/>
<path fill="#a56eff" d="M1902.4 757.0L1920.18 288.74A468.6 468.6 0 0 1 1921.41 288.79Z"/>
<path fill="#313237" d="M1902.4 757.0L1921.41 288.79A468.6 468.6 0 0 1 1922.65 288.84Z"/>
<path fill="#0074c2" d="M1902.4 757.0L1922.65 288.84A468.6 468.6 0 0 1 1923.90 288.89Z"/>
<path fill="#e84a70" d="M1902.4 757.0L1923.90 288.89A468.6 468.6 0 0 1 1925.16 288.95Z"/>
<path fill="#9e4300" d="M1902.4 757.0L1925.16 288.95A468.6 468.6 0 0 1 1926.43 289.02Z"/>
<path fill="#5a2b00" d="M1902.4 757.0L1926.43 289.02A468.6 468.6 0 0 1 1927.70 289.08Z"/>
<path fill="#006968" d="M1902.4 757.0L1927.70 289.08A468.6 468.6 0 0 1 1928.97 289.15Z"/>
<path fill="#a56eff" d="M1902.4 757.0L1928.97 289.15A468.6 468.6 0 0 1 1930.19 289.22Z"/>
<path fill="#313237" d="M1902.4 757.0L1930.19 289.22A468.6 468.6 0 0 1 1931.36 289.30Z"/>
<path fill="#0074c2" d="M1902.4 757.0L1931.36 289.30A468.6 468.6 0 0 1 1932.52 289.37Z"/>
<path fill="#e84a70" d="M1902.4 757.0L1932.52 289.37A468.6 468.6 0 0 1 1933.73 289.45Z"/>
<path fill="#9e4300" d="M1902.4 757.0L1933.73 289.45A468.6 468.6 0 0 1 1935.04 289.54Z"/>
<path fill="#5a2b00" d="M1902.4 757.0L1935.04 289.54A468.6 468.6 0 0 1 1936.49 289.64Z"/>
<path fill="#006968" d="M1902.4 757.0L1936.49 289.64A468.6 468.6 0 0 1 1938.17 289.77Z"/>
<path fill="#a56eff" d="M1902.4 757.0L1938.17 289.77A468.6 468.6 0 0 1 1940.20 289.93Z"/>
<path fill="#313237" d="M1902.4 757.0L1940.20 289.93A468.6 468.6 0 0 1 1942.47 290.12Z"/>
<path fill="#0074c2" d="M1902.4 757.0L1942.47 290.12A468.6 468.6 0 0 1 1944.84 290.33Z"/>
<path fill="#e84a70" d="M1902.4 757.0L1944.84 290.33A468.6 468.6 0 0 1 1947.19 290.55Z"/>
<path fill="#9e4300" d="M1902.4 757.0L1947.19 290.55A468.6 468.6 0 0 1 1949.62 290.78Z"/>
<path fill="#5a2b00" d="M1902.4 757.0L1949.62 290.78A468.6 468.6 0 0 1 1952.13 291.05Z"/>
<path fill="#006968" d="M1902.4 757.0L1952.13 291.05A468.6 468.6 0 0 1 1954.72 291.33Z"/>
<path fill="#a56eff" d="M1902.4 757.0L1954.72 291.33A468.6 468.6 0 0 1 1957.37 291.64Z"/>
<path fill="#313237" d="M1902.4 757.0L1957.37 291.64A468.6 468.6 0 0 1 1960.09 291.97Z"/>
<path fill="#0074c2" d="M1902.4 757.0L1960.09 291.97A468.6 468.6 0 0 1 1962.88 292.32Z"/>
<path fill="#e84a70" d="M1902.4 757.0L1962.88 292.32A468.6 468.6 0 0 1 1965.73 292.70Z"/>
<path fill="#9e4300" d="M1902.4 757.0L1965.73 292.70A468.6 468.6 0 0 1 1968.69 293.11Z"/>
<path fill="#5a2b00" d="M1902.4 757.0L1968.69 293.11A468.6 468.6 0 0 1 1971.70 293.55Z"/>
<path fill="#006968" d="M1902.4 757.0L1971.70 293.55A468.6 468.6 0 0 1 1974.69 294.01Z"/>
<path fill="#a56eff" d="M1902.4 757.0L1974.69 294.01A468.6 468.6 0 0 1 1977.67 294.49Z"/>
<path fill="#313237" d="M1902.4 757.0L1977.67 294.49A468.6 468.6 0 0 1 1980.67 294.98Z"/>
<path fill="#0074c2" d="M1902.4 757.0L1980.67 294.98A468.6 468.6 0 0 1 1983.74 295.51Z"/>
<path fill="#e84a70" d="M1902.4 757.0L1983.74 295.51A468.6 468.6 0 0 1 1986.90 296.08Z"/>
<path fill="#9e4300" d="M1902.4 757.0L1986.90 296.08A468.6 468.6 0 0 1 1990.16 296.69Z"/>
<path fill="#5a2b00" d="M1902.4 757.0L1990.16 296.69A468.6 468.6 0 0 1 1993.50 297.34Z"/>
<path fill="#006968" d="M1902.4 757.0L1993.50 297.34A468.6 468.6 0 0 1 1996.87 298.02Z"/>
<path fill="#a56eff" d="M1902.4 757.0L1996.87 298.02A468.6 468.6 0 0 1 2000.28 298.74Z"/>
<path fill="#313237" d="M1902.4 757.0L2000.28 298.74A468.6 468.6 0 0 1 2003.74 299.49Z"/>
<path fill="#0074c2" d="M1902.4 757.0L2003.74 299.49A468.6 468.6 0 0 1 2007.28 300.29Z"/>
<path fill="#e84a70" d="M1902.4 757.0L2007.28 300.29A468.6 468.6 0 0 1 2010.93 301.14Z"/>
<path fill="#9e4300" d="M1902.4 757.0L2010.93 301.14A468.6 468.6 0 0 1 2014.72 302.06Z"/>
<path fill="#5a2b00" d="M1902.4 757.0L2014.72 302.06A468.6 468.6 0 0 1 2018.58 303.03Z"/>
<path fill="#006968" d="M1902.4 757.0L2018.58 303.03A468.6 468.6 0 0 1 2022.46 304.04Z"/>
<path fill="#a56eff" d="M1902.4 757.0L2022.46 304.04A468.6 468.6 0 0 1 2026.39 305.10Z"/>
<path fill="#313237" d="M1902.4 757.0L2026.39 305.10A468.6 468.6 0 0 1 2030.35 306.21Z"/>
<path fill="#0074c2" d="M1902.4 757.0L2030.35 306.21A468.6 468.6 0 0 1 2034.38 307.37Z"/>
<path fill="#e84a70" d="M1902.4 757.0L2034.38 307.37A468.6 468.6 0 0 1 2038.52 308.61Z"/>
<path fill="#9e4300" d="M1902.4 757.0L2038.52 308.61A468.6 468.6 0 0 1 2042.60 309.87Z"/>
<path fill="#5a2b00" d="M1902.4 757.0L2042.60 309.87A468.6 468.6 0 0 1 2046.39 311.07Z"/>
<path fill="#006968" d="M1902.4 757.0L2046.39 311.07A468.6 468.6 0 0 1 2046.60 311.14Z"/>
<path fill="#a56eff" d="M1902.4 757.0L2046.60 311.14A468.6 468.6 0 0 1 2050.46 312.41Z"/>
<path fill="#313237" d="M1902.4 757.0L2050.46 312.41A468.6 468.6 0 0 1 2054.73 313.85Z"/>
<path fill="#0074c2" d="M1902.4 757.0L2054.73 313.85A468.6 468.6 0 0 1 2059.12 315.38Z"/>
<path fill="#e84a70" d="M1902.4 757.0L2059.12 315.38A468.6 468.6 0 0 1 2063.42 316.93Z"/>
<path fill="#9e4300" d="M1902.4 757.0L2063.42 316.93A468.6 468.6 0 0 1 2067.65 318.50Z"/>
<path fill="#5a2b00" d="M1902.4 757.0L2067.65 318.50A468.6 468.6 0 0 1 2071.94 320.15Z"/>
<path fill="#006968" d="M1902.4 757.0L2071.94 320.15A468.6 468.6 0 0 1 2076.38 321.89Z"/>
<path fill="#a56eff" d="M1902.4 757.0L2076.38 321.89A468.6 468.6 0 0 1 2080.92 323.74Z"/>
<path fill="#313237" d="M1902.4 757.0L2080.92 323.74A468.6 468.6 0 0 1 2085.56 325.68Z"/>
<path fill="#0074c2" d="M1902.4 757.0L2085.56 325.68A468.6 468.6 0 0 1 2090.29 327.72Z"/>
<path fill="#e84a70" d="M1902.4 757.0L2090.29 327.72A468.6 468.6 0 0 1 2095.15 329.88Z"/>
<path fill="#9e4300" d="M1902.4 757.0L2095.15 329.88A468.6 468.6 0 0 1 2100.21 332.20Z"/>
<path fill="#5a2b00" d="M1902.4 757.0L2100.21 332.20A468.6 468.6 0 0 1 2105.31 334.61Z"/>
<path fill="#006968" d="M1902.4 757.0L2105.31 334.61A468.6 468.6 0 0 1 2110.30 337.04Z"/>
<path fill="#a56eff" d="M1902.4 757.0L2110.30 337.04A468.6 468.6 0 0 1 2115.20 339.51Z"/>
<path fill="#313237" d="M1902.4 757.0L2115.20 339.51A468.6 468.6 0 0 1 2120.06 342.02Z"/>
<path fill="#0074c2" d="M1902.4 757.0L2120.06 342.02A468.6 468.6 0 0 1 2124.87 344.58Z"/>
<path fill="#e84a70" d="M1902.4 757.0L2124.87 344.58A468.6 468.6 0 0 1 2129.67 347.20Z"/>
<path fill="#9e4300" d="M1902.4 757.0L2129.67 347.20A468.6 468.6 0 0 1 2134.47 349.90Z"/>
<path fill="#5a2b00" d="M1902.4 757.0L2134.47 349.90A468.6 468.6 0 0 1 2139.29 352.69Z"/>
<path fill="#006968" d="M1902.4 757.0L2139.29 352.69A468.6 468.6 0 0 1 2144.13 355.56Z"/>
<path fill="#a56eff" d="M1902.4 757.0L2144.13 355.56A468.6 468.6 0 0 1 2148.96 358.51Z"/>
<path fill="#313237" d="M1902.4 757.0L2148.96 358.51A468.6 468.6 0 0 1 2153.77 361.53Z"/>
<path fill="#0074c2" d="M1902.4 757.0L2153.77 361.53A468.6 468.6 0 0 1 2158.59 364.63Z"/>
<path fill="#e84a70" d="M1902.4 757.0L2158.59 364.63A468.6 468.6 0 0 1 2163.41 367.82Z"/>
<path fill="#9e4300" d="M1902.4 757.0L2163.41 367.82A468.6 468.6 0 0 1 2168.26 371.12Z"/>
<path fill="#5a2b00" d="M1902.4 757.0L2168.26 371.12A468.6 468.6 0 0 1 2173.13 374.52Z"/>
<path fill="#006968" d="M1902.4 757.0L2173.13 374.52A468.6 468.6 0 0 1 2178.04 378.05Z"/>
<path fill="#a56eff" d="M1902.4 757.0L2178.04 378.05A468.6 468.6 0 0 1 2183.00 381.70Z"/>
<path fill="#313237" d="M1902.4 757.0L2183.00 381.70A468.6 468.6 0 0 1 2187.98 385.48Z"/>
<path fill="#0074c2" d="M1902.4 757.0L2187.98 385.48A468.6 468.6 0 0 1 2192.98 389.37Z"/>
<path fill="#e84a70" d="M1902.4 757.0L2192.98 389.37A468.6 468.6 0 0 1 2200.45 395.40Z"/>
<path fill="#9e4300" d="M1902.4 757.0L2200.45 395.40A468.6 468.6 0 0 1 2205.39 399.54Z"/>
<path fill="#5a2b00" d="M1902.4 757.0L2205.39 399.54A468.6 468.6 0 0 1 2210.29 403.75Z"/>
<path fill="#006968" d="M1902.4 757.0L2210.29 403.75A468.6 468.6 0 0 1 2215.13 408.02Z"/>
<path fill="#a56eff" d="M1902.4 757.0L2215.13 408.02A468.6 468.6 0 0 1 2219.90 412.36Z"/>
<path fill="#313237" d="M1902.4 757.0L2219.90 412.36A468.6 468.6 0 0 1 2224.62 416.77Z"/>
<path fill="#0074c2" d="M1902.4 757.0L2224.62 416.77A468.6 468.6 0 0 1 2229.31 421.27Z"/>
<path fill="#e84a70" d="M1902.4 757.0L2229.31 421.27A468.6 468.6 0 0 1 2233.98 425.88Z"/>
<path fill="#9e4300" d="M1902.4 757.0L2233.98 425.88A468.6 468.6 0 0 1 2238.65 430.62Z"/>
<path fill="#5a2b00" d="M1902.4 757.0L2238.65 430.62A468.6 468.6 0 0 1 2243.32 435.51Z"/>
<path fill="#006968" d="M1902.4 757.0L2243.32 435.51A468.6 468.6 0 0 1 2248.02 440.56Z"/>
<path fill="#a56eff" d="M1902.4 757.0L2248.02 440.56A468.6 468.6 0 0 1 2252.70 445.76Z"/>
<path fill="#313237" d="M1902.4 757.0L2252.70 445.76A468.6 468.6 0 0 1 2257.38 451.10Z"/>
<path fill="#0074c2" d="M1902.4 757.0L2257.38 451.10A468.6 468.6 0 0 1 2262.04 456.59Z"/>
<path fill="#e84a70" d="M1902.4 757.0L2262.04 456.59A468.6 468.6 0 0 1 2266.67 462.23Z"/>
<path fill="#9e4300" d="M1902.4 757.0L2266.67 462.23A468.6 468.6 0 0 1 2271.29 468.03Z"/>
<path fill="#5a2b00" d="M1902.4 757.0L2271.29 468.03A468.6 468.6 0 0 1 2275.88 473.98Z"/>
<path fill="#006968" d="M1902.4 757.0L2275.88 473.98A468.6 468.6 0 0 1 2280.44 480.11Z"/>
<path fill="#a56eff" d="M1902.4 757.0L2280.44 480.11A468.6 468.6 0 0 1 2285.01 486.45Z"/>
<path fill="#313237" d="M1902.4 757.0L2285.01 486.45A468.6 468.6 0 0 1 2289.55 493.00Z"/>
<path fill="#0074c2" d="M1902.4 757.0L2289.55 493.00A468.6 468.6 0 0 1 2294.05 499.71Z"/>
<path fill="#e84a70" d="M1902.4 757.0L2294.05 499.71A468.6 468.6 0 0 1 2298.46 506.56Z"/>
<path fill="#9e4300" d="M1902.4 757.0L2298.46 506.56A468.6 468.6 0 0 1 2302.77 513.51Z"/>
<path fill="#5a2b00" d="M1902.4 757.0L2302.77 513.51A468.6 468.6 0 0 1 2306.96 520.53Z"/>
<path fill="#006968" d="M1902.4 757.0L2306.96 520.53A468.6 468.6 0 0 1 2311.00 527.58Z"/>
<path fill="#a56eff" d="M1902.4 757.0L2311.00 527.58A468.6 468.6 0 0 1 2314.92 534.71Z"/>
<path fill="#313237" d="M1902.4 757.0L2314.92 534.71A468.6 468.6 0 0 1 2318.73 541.93Z"/>
<path fill="#0074c2" d="M1902.4 757.0L2318.73 541.93A468.6 468.6 0 0 1 2322.43 549.24Z"/>
<path fill="#e84a70" d="M1902.4 757.0L2322.43 549.24A468.6 468.6 0 0 1 2326.00 556.63Z"/>
<path fill="#9e4300" d="M1902.4 757.0L2326.00 556.63A468.6 468.6 0 0 1 2329.46 564.11Z"/>
<path fill="#5a2b00" d="M1902.4 757.0L2329.46 564.11A468.6 468.6 0 0 1 2332.79 571.67Z"/>
<path fill="#006968" d="M1902.4 757.0L2332.79 571.67A468.6 468.6 0 0 1 2336.01 579.31Z"/>
<path fill="#a56eff" d="M1902.4 757.0L2336.01 579.31A468.6 468.6 0 0 1 2339.08 587.01Z"/>
<path fill="#313237" d="M1902.4 757.0L2339.08 587.01A468.6 468.6 0 0 1 2342.02 594.76Z"/>
<path fill="#0074c2" d="M1902.4 757.0L2342.02 594.76A468.6 468.6 0 0 1 2344.83 602.60Z"/>
<path fill="#e84a70" d="M1902.4 757.0L2344.83 602.60A468.6 468.6 0 0 1 2347.52 610.53Z"/>
<path fill="#9e4300" d="M1902.4 757.0L2347.52 610.53A468.6 468.6 0 0 1 2350.09 618.58Z"/>
<path fill="#5a2b00" d="M1902.4 757.0L2350.09 618.58A468.6 468.6 0 0 1 2352.54 626.76Z"/>
<path fill="#006968" d="M1902.4 757.0L2352.54 626.76A468.6 468.6 0 0 1 2354.86 635.09Z"/>
<path fill="#a56eff" d="M1902.4 757.0L2354.86 635.09A468.6 468.6 0 0 1 2357.06 643.56Z"/>
<path fill="#313237" d="M1902.4 757.0L2357.06 643.56A468.6 468.6 0 0 1 2359.12 652.15Z"/>
<path fill="#0074c2" d="M1902.4 757.0L2359.12 652.15A468.6 468.6 0 0 1 2361.03 660.85Z"/>
<path fill="#e84a70" d="M1902.4 757.0L2361.03 660.85A468.6 468.6 0 0 1 2362.79 669.66Z"/>
<path fill="#9e4300" d="M1902.4 757.0L2362.79 669.66A468.6 468.6 0 0 1 2364.39 678.55Z"/>
<path fill="#5a2b00" d="M1902.4 757.0L2364.39 678.55A468.6 468.6 0 0 1 2365.82 687.52Z"/>
<path fill="#006968" d="M1902.4 757.0L2365.82 687.52A468.6 468.6 0 0 1 2367.08 696.55Z"/>
<path fill="#a56eff" d="M1902.4 757.0L2367.08 696.55A468.6 468.6 0 0 1 2368.18 705.65Z"/>
<path fill="#313237" d="M1902.4 757.0L2368.18 705.65A468.6 468.6 0 0 1 2369.10 714.84Z"/>
<path fill="#0074c2" d="M1902.4 757.0L2369.10 714.84A468.6 468.6 0 0 1 2369.84 724.09Z"/>
<path fill="#e84a70" d="M1902.4 757.0L2369.84 724.09A468.6 468.6 0 0 1 2370.41 733.41Z"/>
<path fill="#9e4300" d="M1902.4 757.0L2370.41 733.41A468.6 468.6 0 0 1 2370.78 742.80Z"/>
<path fill="#5a2b00" d="M1902.4 757.0L2370.78 742.80A468.6 468.6 0 0 1 2370.98 752.25Z"/>
<path fill="#006968" d="M1902.4 757.0L2370.98 752.25A468.6 468.6 0 0 1 2370.98 761.76Z"/>
<path fill="#a56eff" d="M1902.4 757.0L2370.98 761.76A468.6 468.6 0 0 1 2370.78 771.32Z"/>
<path fill="#313237" d="M1902.4 757.0L2370.78 771.32A468.6 468.6 0 0 1 2370.39 780.93Z"/>
<path fill="#0074c2" d="M1902.4 757.0L2370.39 780.93A468.6 468.6 0 0 1 2369.80 790.58Z"/>
<path fill="#e84a70" d="M1902.4 757.0L2369.80 790.58A468.6 468.6 0 0 1 2369.00 800.29Z"/>
<path fill="#9e4300" d="M1902.4 757.0L2369.00 800.29A468.6 468.6 0 0 1 2367.99 810.06Z"/>
<path fill="#5a2b00" d="M1902.4 757.0L2367.99 810.06A468.6 468.6 0 0 1 2366.76 819.88Z"/>
<path fill="#006968" d="M1902.4 757.0L2366.76 819.88A468.6 468.6 0 0 1 2365.32 829.75Z"/>
<path fill="#a56eff" d="M1902.4 757.0L2365.32 829.75A468.6 468.6 0 0 1 2363.65 839.68Z"/>
<path fill="#313237" d="M1902.4 757.0L2363.65 839.68A468.6 468.6 0 0 1 2361.75 849.64Z"/>
<path fill="#0074c2" d="M1902.4 757.0L2361.75 849.64A468.6 468.6 0 0 1 2359.62 859.64Z"/>
<path fill="#e84a70" d="M1902.4 757.0L2359.62 859.64A468.6 468.6 0 0 1 2357.25 869.66Z"/>
<path fill="#9e4300" d="M1902.4 757.0L2357.25 869.66A468.6 468.6 0 0 1 2354.65 879.71Z"/>
<path fill="#5a2b00" d="M1902.4 757.0L2354.65 879.71A468.6 468.6 0 0 1 2351.80 889.76Z"/>
<path fill="#006968" d="M1902.4 757.0L2351.80 889.76A468.6 468.6 0 0 1 2348.71 899.82Z"/>
<path fill="#a56eff" d="M1902.4 757.0L2348.71 899.82A468.6 468.6 0 0 1 2345.36 909.89Z"/>
<path fill="#313237" d="M1902.4 757.0L2345.36 909.89A468.6 468.6 0 0 1 2341.75 919.95Z"/>
<path fill="#0074c2" d="M1902.4 757.0L2341.75 919.95A468.6 468.6 0 0 1 2337.89 930.01Z"/>
<path fill="#e84a70" d="M1902.4 757.0L2337.89 930.01A468.6 468.6 0 0 1 2333.77 940.04Z"/>
<path fill="#9e4300" d="M1902.4 757.0L2333.77 940.04A468.6 468.6 0 0 1 2329.40 950.03Z"/>
<path fill="#5a2b00" d="M1902.4 757.0L2329.40 950.03A468.6 468.6 0 0 1 2324.76 959.97Z"/>
<path fill="#006968" d="M1902.4 757.0L2324.76 959.97A468.6 468.6 0 0 1 2319.87 969.85Z"/>
<path fill="#a56eff" d="M1902.4 757.0L2319.87 969.85A468.6 468.6 0 0 1 2314.73 979.65Z"/>
<path fill="#313237" d="M1902.4 757.0L2314.73 979.65A468.6 468.6 0 0 1 2309.32 989.38Z"/>
<path fill="#0074c2" d="M1902.4 757.0L2309.32 989.38A468.6 468.6 0 0 1 2303.65 999.05Z"/>
<path fill="#e84a70" d="M1902.4 757.0L2303.65 999.05A468.6 468.6 0 0 1 2297.71 1008.63Z"/>
<path fill="#9e4300" d="M1902.4 757.0L2297.71 1008.63A468.6 468.6 0 0 1 2291.49 1018.14Z"/>
<path fill="#5a2b00" d="M1902.4 757.0L2291.49 1018.14A468.6 468.6 0 0 1 2285.00 1027.56Z"/>
<path fill="#006968" d="M1902.4 757.0L2285.00 1027.56A468.6 468.6 0 0 1 2278.23 1036.89Z"/>
<path fill="#a56eff" d="M1902.4 757.0L2278.23 1036.89A468.6 468.6 0 0 1 2271.17 1046.13Z"/>
<path fill="#313237" d="M1902.4 757.0L2271.17 1046.13A468.6 468.6 0 0 1 2263.83 1055.25Z"/>
<path fill="#0074c2" d="M1902.4 757.0L2263.83 1055.25A468.6 468.6 0 0 1 2256.21 1064.25Z"/>
<path fill="#e84a70" d="M1902.4 757.0L2256.21 1064.25A468.6 468.6 0 0 1 2248.31 1073.12Z"/>
<path fill="#9e4300" d="M1902.4 757.0L2248.31 1073.12A468.6 468.6 0 0 1 2240.13 1081.85Z"/>
<path fill="#5a2b00" d="M1902.4 757.0L2240.13 1081.85A468.6 468.6 0 0 1 2231.66 1090.42Z"/>
<path fill="#006968" d="M1902.4 757.0L2231.66 1090.42A468.6 468.6 0 0 1 2222.92 1098.84Z"/>
<path fill="#a56eff" d="M1902.4 757.0L2222.92 1098.84A468.6 468.6 0 0 1 2213.86 1107.11Z"/>
<path fill="#313237" d="M1902.4 757.0L2213.86 1107.11A468.6 468.6 0 0 1 2204.50 1115.22Z"/>
<path fill="#0074c2" d="M1902.4 757.0L2204.50 1115.22A468.6 468.6 0 0 1 2194.87 1123.12Z"/>
<path fill="#e84a70" d="M1902.4 757.0L2194.87 1123.12A468.6 468.6 0 0 1 2184.98 1130.81Z"/>
<path fill="#9e4300" d="M1902.4 757.0L2184.98 1130.81A468.6 468.6 0 0 1 2174.87 1138.24Z"/>
<path fill="#5a2b00" d="M1902.4 757.0L2174.87 1138.24A468.6 468.6 0 0 1 2164.55 1145.41Z"/>
<path fill="#006968" d="M1902.4 757.0L2164.55 1145.41A468.6 468.6 0 0 1 2154.06 1152.29Z"/>
<path fill="#a56eff" d="M1902.4 757.0L2154.06 1152.29A468.6 468.6 0 0 1 2143.39 1158.88Z"/>
<path fill="#313237" d="M1902.4 757.0L2143.39 1158.88A468.6 468.6 0 0 1 2132.52 1165.20Z"/>
<path fill="#0074c2" d="M1902.4 757.0L2132.52 1165.20A468.6 468.6 0 0 1 2121.46 1171.24Z"/>
<path fill="#e84a70" d="M1902.4 757.0L2121.46 1171.24A468.6 468.6 0 0 1 2110.21 1177.00Z"/>
<path fill="#9e4300" d="M1902.4 757.0L2110.21 1177.00A468.6 468.6 0 0 1 2098.76 1182.48Z"/>
<path fill="#5a2b00" d="M1902.4 757.0L2098.76 1182.48A468.6 468.6 0 0 1 2087.10 1187.66Z"/>
<path fill="#006968" d="M1902.4 757.0L2087.10 1187.66A468.6 468.6 0 0 1 2075.24 1192.56Z"/>
<path fill="#a56eff" d="M1902.4 757.0L2075.24 1192.56A468.6 468.6 0 0 1 2063.21 1197.14Z"/>
<path fill="#313237" d="M1902.4 757.0L2063.21 1197.14A468.6 468.6 0 0 1 2051.00 1201.41Z"/>
<path fill="#0074c2" d="M1902.4 757.0L2051.00 1201.41A468.6 468.6 0 0 1 2038.63 1205.36Z"/>
<path fill="#e84a70" d="M1902.4 757.0L2038.63 1205.36A468.6 468.6 0 0 1 2026.09 1208.98Z"/>
<path fill="#9e4300" d="M1902.4 757.0L2026.09 1208.98A468.6 468.6 0 0 1 2013.39 1212.27Z"/>
<path fill="#5a2b00" d="M1902.4 757.0L2013.39 1212.27A468.6 468.6 0 0 1 2000.54 1215.21Z"/>
<path fill="#006968" d="M1902.4 757.0L2000.54 1215.21A468.6 468.6 0 0 1 1987.54 1217.80Z"/>
<path fill="#a56eff" d="M1902.4 757.0L1987.54 1217.80A468.6 468.6 0 0 1 1974.40 1220.04Z"/>
<path fill="#313237" d="M1902.4 757.0L1974.40 1220.04A468.6 468.6 0 0 1 1961.13 1221.91Z"/>
<path fill="#0074c2" d="M1902.4 757.0L1961.13 1221.91A468.6 468.6 0 0 1 1947.74 1223.40Z"/>
<path fill="#e84a70" d="M1902.4 757.0L1947.74 1223.40A468.6 468.6 0 0 1 1934.24 1224.52Z"/>
<path fill="#9e4300" d="M1902.4 757.0L1934.24 1224.52A468.6 468.6 0 0 1 1920.65 1225.24Z"/>
<path fill="#5a2b00" d="M1902.4 757.0L1920.65 1225.24A468.6 468.6 0 0 1 1906.98 1225.58Z"/>
<path fill="#006968" d="M1902.4 757.0L1906.98 1225.58A468.6 468.6 0 0 1 1893.57 1225.52Z"/>
<path fill="#a56eff" d="M1902.4 757.0L1893.57 1225.52A468.6 468.6 0 0 1 1879.67 1225.05Z"/>
<path fill="#313237" d="M1902.4 757.0L1879.67 1225.05A468.6 468.6 0 0 1 1865.72 1224.16Z"/>
<path fill="#0074c2" d="M1902.4 757.0L1865.72 1224.16A468.6 468.6 0 0 1 1852.12 1222.89Z"/>
<path fill="#e84a70" d="M1902.4 757.0L1852.12 1222.89A468.6 468.6 0 0 1 1838.24 1221.19Z"/>
<path fill="#9e4300" d="M1902.4 757.0L1838.24 1221.19A468.6 468.6 0 0 1 1824.33 1219.05Z"/>
<path fill="#5a2b00" d="M1902.4 757.0L1824.33 1219.05A468.6 468.6 0 0 1 1810.34 1216.47Z"/>
<path fill="#006968" d="M1902.4 757.0L1810.34 1216.47A468.6 468.6 0 0 1 1796.11 1213.39Z"/>
<path fill="#a56eff" d="M1902.4 757.0L1796.11 1213.39A468.6 468.6 0 0 1 1782.54 1210.01Z"/>
<path fill="#313237" d="M1902.4 757.0L1782.54 1210.01A468.6 468.6 0 0 1 1769.00 1206.21Z"/>
<path fill="#0074c2" d="M1902.4 757.0L1769.00 1206.21A468.6 468.6 0 0 1 1755.88 1202.11Z"/>
<path fill="#e84a70" d="M1902.4 757.0L1755.88 1202.11A468.6 468.6 0 0 1 1741.98 1197.28Z"/>
<path fill="#9e4300" d="M1902.4 757.0L1741.98 1197.28A468.6 468.6 0 0 1 1728.53 1192.15Z"/>
<path fill="#5a2b00" d="M1902.4 757.0L1728.53 1192.15A468.6 468.6 0 0 1 1714.87 1186.44Z"/>
<path fill="#006968" d="M1902.4 757.0L1714.87 1186.44A468.6 468.6 0 0 1 1701.33 1180.27Z"/>
<path fill="#a56eff" d="M1902.4 757.0L1701.33 1180.27A468.6 468.6 0 0 1 1687.91 1173.63Z"/>
<path fill="#313237" d="M1902.4 757.0L1687.91 1173.63A468.6 468.6 0 0 1 1675.58 1167.04Z"/>
<path fill="#0074c2" d="M1902.4 757.0L1675.58 1167.04A468.6 468.6 0 0 1 1662.95 1159.80Z"/>
<path fill="#e84a70" d="M1902.4 757.0L1662.95 1159.80A468.6 468.6 0 0 1 1650.21 1151.95Z"/>
<path fill="#9e4300" d="M1902.4 757.0L1650.21 1151.95A468.6 468.6 0 0 1 1637.39 1143.46Z"/>
<path fill="#5a2b00" d="M1902.4 757.0L1637.39 1143.46A468.6 468.6 0 0 1 1625.64 1135.14Z"/>
<path fill="#006968" d="M1902.4 757.0L1625.64 1135.14A468.6 468.6 0 0 1 1612.81 1125.40Z"/>
<path fill="#a56eff" d="M1902.4 757.0L1612.81 1125.40A468.6 468.6 0 0 1 1592.51 1108.50Z"/>
<path fill="#313237" d="M1902.4 757.0L1592.51 1108.50A468.6 468.6 0 0 1 1573.37 1090.66Z"/>
<path fill="#0074c2" d="M1902.4 757.0L1573.37 1090.66A468.6 468.6 0 0 1 1563.34 1080.45Z"/>
<path fill="#e84a70" d="M1902.4 757.0L1563.34 1080.45A468.6 468.6 0 0 1 1553.83 1070.19Z"/>
<path fill="#9e4300" d="M1902.4 757.0L1553.83 1070.19A468.6 468.6 0 0 1 1544.17 1059.09Z"/>
<path fill="#5a2b00" d="M1902.4 757.0L1544.17 1059.09A468.6 468.6 0 0 1 1534.81 1047.62Z"/>
<path fill="#006968" d="M1902.4 757.0L1534.81 1047.62A468.6 468.6 0 0 1 1525.47 1035.41Z"/>
<path fill="#a56eff" d="M1902.4 757.0L1525.47 1035.41A468.6 468.6 0 0 1 1516.08 1022.22Z"/>
<path fill="#313237" d="M1902.4 757.0L1516.08 1022.22A468.6 468.6 0 0 1 1507.36 1009.05Z"/>
<path fill="#0074c2" d="M1902.4 757.0L1507.36 1009.05A468.6 468.6 0 0 1 1499.51 996.31Z"/>
<path fill="#e84a70" d="M1902.4 757.0L1499.51 996.31A468.6 468.6 0 0 1 1491.61 982.46Z"/>
<path fill="#9e4300" d="M1902.4 757.0L1491.61 982.46A468.6 468.6 0 0 1 1484.21 968.43Z"/>
<path fill="#5a2b00" d="M1902.4 757.0L1484.21 968.43A468.6 468.6 0 0 1 1477.22 954.00Z"/>
<path fill="#006968" d="M1902.4 757.0L1477.22 954.00A468.6 468.6 0 0 1 1470.73 939.34Z"/>
<path fill="#a56eff" d="M1902.4 757.0L1470.73 939.34A468.6 468.6 0 0 1 1464.92 924.93Z"/>
<path fill="#313237" d="M1902.4 757.0L1464.92 924.93A468.6 468.6 0 0 1 1459.33 909.56Z"/>
<path fill="#0074c2" d="M1902.4 757.0L1459.33 909.56A468.6 468.6 0 0 1 1454.73 895.49Z"/>
<path fill="#e84a70" d="M1902.4 757.0L1454.73 895.49A468.6 468.6 0 0 1 1450.00 879.15Z"/>
<path fill="#9e4300" d="M1902.4 757.0L1450.00 879.15A468.6 468.6 0 0 1 1446.09 863.61Z"/>
<path fill="#5a2b00" d="M1902.4 757.0L1446.09 863.61A468.6 468.6 0 0 1 1442.58 847.30Z"/>
<path fill="#006968" d="M1902.4 757.0L1442.58 847.30A468.6 468.6 0 0 1 1439.74 831.36Z"/>
<path fill="#a56eff" d="M1902.4 757.0L1439.74 831.36A468.6 468.6 0 0 1 1437.45 815.41Z"/>
<path fill="#313237" d="M1902.4 757.0L1437.45 815.41A468.6 468.6 0 0 1 1435.66 798.74Z"/>
<path fill="#0074c2" d="M1902.4 757.0L1435.66 798.74A468.6 468.6 0 0 1 1434.03 771.64Z"/>
<path fill="#e84a70" d="M1902.4 757.0L1434.03 771.64A468.6 468.6 0 0 1 1433.80 755.77Z"/>
<path fill="#9e4300" d="M1902.4 757.0L1433.80 755.77A468.6 468.6 0 0 1 1434.13 739.33Z"/>
<path fill="#5a2b00" d="M1902.4 757.0L1434.13 739.33A468.6 468.6 0 0 1 1435.05 722.83Z"/>
<path fill="#006968" d="M1902.4 757.0L1435.05 722.83A468.6 468.6 0 0 1 1436.55 706.30Z"/>
<path fill="#a56eff" d="M1902.4 757.0L1436.55 706.30A468.6 468.6 0 0 1 1438.65 689.75Z"/>
<path fill="#313237" d="M1902.4 757.0L1438.65 689.75A468.6 468.6 0 0 1 1441.35 673.21Z"/>
<path fill="#0074c2" d="M1902.4 757.0L1441.35 673.21A468.6 468.6 0 0 1 1444.66 656.70Z"/>
<path fill="#e84a70" d="M1902.4 757.0L1444.66 656.70A468.6 468.6 0 0 1 1448.58 640.24Z"/>
<path fill="#9e4300" d="M1902.4 757.0L1448.58 640.24A468.6 468.6 0 0 1 1453.11 623.87Z"/>
<path fill="#5a2b00" d="M1902.4 757.0L1453.11 623.87A468.6 468.6 0 0 1 1458.26 607.59Z"/>
<path fill="#006968" d="M1902.4 757.0L1458.26 607.59A468.6 468.6 0 0 1 1464.02 591.44Z"/>
<path fill="#a56eff" d="M1902.4 757.0L1464.02 591.44A468.6 468.6 0 0 1 1470.40 575.44Z"/>
<path fill="#313237" d="M1902.4 757.0L1470.40 575.44A468.6 468.6 0 0 1 1477.40 559.61Z"/>
<path fill="#0074c2" d="M1902.4 757.0L1477.40 559.61A468.6 468.6 0 0 1 1485.02 543.98Z"/>
<path fill="#e84a70" d="M1902.4 757.0L1485.02 543.98A468.6 468.6 0 0 1 1493.24 528.58Z"/>
<path fill="#9e4300" d="M1902.4 757.0L1493.24 528.58A468.6 468.6 0 0 1 1502.08 513.43Z"/>
<path fill="#5a2b00" d="M1902.4 757.0L1502.08 513.43A468.6 468.6 0 0 1 1511.52 498.55Z"/>
<path fill="#006968" d="M1902.4 757.0L1511.52 498.55A468.6 468.6 0 0 1 1521.55 483.98Z"/>
<path fill="#a56eff" d="M1902.4 757.0L1521.55 483.98A468.6 468.6 0 0 1 1532.18 469.73Z"/>
<path fill="#313237" d="M1902.4 757.0L1532.18 469.73A468.6 468.6 0 0 1 1543.39 455.84Z"/>
<path fill="#0074c2" d="M1902.4 757.0L1543.39 455.84A468.6 468.6 0 0 1 1555.18 442.32Z"/>
<path fill="#e84a70" d="M1902.4 757.0L1555.18 442.32A468.6 468.6 0 0 1 1567.53 429.21Z"/>
<path fill="#9e4300" d="M1902.4 757.0L1567.53 429.21A468.6 468.6 0 0 1 1580.42 416.53Z"/>
<path fill="#5a2b00" d="M1902.4 757.0L1580.42 416.53A468.6 468.6 0 0 1 1593.86 404.31Z"/>
<path fill="#006968" d="M1902.4 757.0L1593.86 404.31A468.6 468.6 0 0 1 1608.14 392.32Z"/>
<path fill="#a56eff" d="M1902.4 757.0L1608.14 392.32A468.6 468.6 0 0 1 1622.62 381.09Z"/>
<path fill="#313237" d="M1902.4 757.0L1622.62 381.09A468.6 468.6 0 0 1 1638.40 369.84Z"/>
<path fill="#0074c2" d="M1902.4 757.0L1638.40 369.84A468.6 468.6 0 0 1 1653.80 359.78Z"/>
<path fill="#e84a70" d="M1902.4 757.0L1653.80 359.78A468.6 468.6 0 0 1 1669.52 350.37Z"/>
<path fill="#9e4300" d="M1902.4 757.0L1669.52 350.37A468.6 468.6 0 0 1 1685.73 341.50Z"/>
<path fill="#5a2b00" d="M1902.4 757.0L1685.73 341.50A468.6 468.6 0 0 1 1701.99 333.42Z"/>
<path fill="#006968" d="M1902.4 757.0L1701.99 333.42A468.6 468.6 0 0 1 1718.70 325.91Z"/>
<path fill="#a56eff" d="M1902.4 757.0L1718.70 325.91A468.6 468.6 0 0 1 1736.07 318.91Z"/>
<path fill="#313237" d="M1902.4 757.0L1736.07 318.91A468.6 468.6 0 0 1 1755.42 312.05Z"/>
<path fill="#0074c2" d="M1902.4 757.0L1755.42 312.05A468.6 468.6 0 0 1 1809.94 297.61Z"/>
<path fill="#e84a70" d="M1902.4 757.0L1809.94 297.61A468.6 468.6 0 0 1 1828.61 294.25Z"/>
<path fill="#9e4300" d="M1902.4 757.0L1828.61 294.25A468.6 468.6 0 0 1 1847.08 291.68Z"/>
<path fill="#5a2b00" d="M1902.4 757.0L1847.08 291.68A468.6 468.6 0 0 1 1865.47 289.86Z"/>
<path fill="#006968" d="M1902.4 757.0L1865.47 289.86A468.6 468.6 0 0 1 1884.33 288.75Z"/>
<path fill="#a56eff" d="M1902.4 757.0L1884.33 288.75A468.6 468.6 0 0 1 1902.40 288.40Z"/>
</g>
<g fill="#cccccc" stroke="#cccccc" stroke-width="0.45" font-size="24" text-anchor="middle" font-family="Liberation Sans, sans-serif">
<text x="1902.5" y="533.3">0.02%</text>
<text x="1902.8" y="533.3">0.02%</text>
<text x="1903.1" y="533.3">0.02%</text>
<text x="1903.4" y="533.3">0.02%</text>
<text x="1903.7" y="533.3">0.02%</text>
<text x="1904.1" y="533.3">0.03%</text>
<text x="1904.4" y="533.3">0.03%</text>
<text x="1904.9" y="533.3">0.03%</text>
<text x="1905.3" y="533.3">0.03%</text>
<text x="1905.8" y="533.3">0.03%</text>
<text x="1906.4" y="533.3">0.04%</text>
<text x="1906.9" y="533.3">0.04%</text>
<text x="1907.4" y="533.4">0.04%</text>
<text x="1908.0" y="533.4">0.04%</text>
<text x="1908.6" y="533.4">0.04%</text>
<text x="1909.2" y="533.4">0.04%</text>
<text x="1909.8" y="533.4">0.04%</text>
<text x="1910.4" y="533.4">0.04%</text>
<text x="1911.0" y="533.5">0.04%</text>
<text x="1911.6" y="533.5">0.04%</text>
<text x="1912.2" y="533.5">0.04%</text>
<text x="1912.8" y="533.5">0.04%</text>
<text x="1913.5" y="533.6">0.04%</text>
<text x="1914.1" y="533.6">0.04%</text>
<text x="1914.7" y="533.6">0.04%</text>
<text x="1915.4" y="533.7">0.04%</text>
<text x="1916.0" y="533.7">0.04%</text>
<text x="1916.6" y="533.7">0.04%</text>
<text x="1917.2" y="533.8">0.04%</text>
<text x="1917.8" y="533.8">0.04%</text>
<text x="1918.4" y="533.8">0.04%</text>
<text x="1919.1" y="533.9">0.05%</text>
<text x="1919.9" y="534.0">0.06%</text>
<text x="1920.8" y="534.0">0.07%</text>
<text x="1921.9" y="534.1">0.08%</text>
<text x="1923.0" y="534.2">0.08%</text>
<text x="1924.2" y="534.3">0.08%</text>
<text x="1925.4" y="534.4">0.08%</text>
<text x="1926.6" y="534.6">0.09%</text>
<text x="1927.9" y="534.7">0.09%</text>
<text x="1929.2" y="534.8">0.09%</text>
<text x="1930.6" y="535.0">0.09%</text>
<text x="1931.9" y="535.2">0.10%</text>
<text x="1933.4" y="535.4">0.10%</text>
<text x="1934.8" y="535.6">0.10%</text>
<text x="1936.3" y="535.8">0.10%</text>
<text x="1937.8" y="536.0">0.10%</text>
<text x="1939.3" y="536.2">0.10%</text>
<text x="1940.8" y="536.5">0.10%</text>
<text x="1942.3" y="536.7">0.11%</text>
<text x="1943.9" y="537.0">0.11%</text>
<text x="1945.5" y="537.3">0.11%</text>
<text x="1947.1" y="537.6">0.12%</text>
<text x="1948.8" y="537.9">0.12%</text>
<text x="1950.5" y="538.3">0.12%</text>
<text x="1952.2" y="538.7">0.12%</text>
<text x="1954.0" y="539.0">0.12%</text>
<text x="1955.8" y="539.5">0.13%</text>
<text x="1957.6" y="539.9">0.13%</text>
<text x="1959.5" y="540.4">0.14%</text>
<text x="1961.5" y="540.9">0.14%</text>
<text x="1963.4" y="541.4">0.14%</text>
<text x="1965.4" y="541.9">0.14%</text>
<text x="1967.4" y="542.5">0.14%</text>
<text x="1969.4" y="543.1">0.15%</text>
<text x="1971.5" y="543.7">0.15%</text>
<text x="1973.4" y="544.3">0.13%</text>
<text x="1974.4" y="544.7">0.01%</text>
<text x="1975.5" y="545.0">0.14%</text>
<text x="1977.5" y="545.7">0.15%</text>
<text x="1979.7" y="546.4">0.16%</text>
<text x="1981.8" y="547.2">0.16%</text>
<text x="1984.0" y="548.0">0.15%</text>
<text x="1986.1" y="548.8">0.16%</text>
<text x="1988.3" y="549.6">0.16%</text>
<text x="1990.5" y="550.5">0.17%</text>
<text x="1992.8" y="551.5">0.17%</text>
<text x="1995.2" y="552.4">0.18%</text>
<text x="1997.6" y="553.5">0.18%</text>
<text x="2000.0" y="554.6">0.19%</text>
<text x="2002.6" y="555.8">0.19%</text>
<text x="2005.1" y="557.0">0.19%</text>
<text x="2007.6" y="558.2">0.19%</text>
<text x="2010.0" y="559.5">0.19%</text>
<text x="2012.4" y="560.7">0.19%</text>
<text x="2014.8" y="562.0">0.19%</text>
<text x="2017.2" y="563.4">0.19%</text>
<text x="2019.6" y="564.7">0.19%</text>
<text x="2022.1" y="566.2">0.19%</text>
<text x="2024.5" y="567.6">0.19%</text>
<text x="2026.9" y="569.1">0.19%</text>
<text x="2029.3" y="570.6">0.19%</text>
<text x="2031.7" y="572.2">0.20%</text>
<text x="2034.1" y="573.8">0.20%</text>
<text x="2036.6" y="575.5">0.20%</text>
<text x="2039.0" y="577.2">0.21%</text>
<text x="2041.5" y="579.0">0.21%</text>
<text x="2043.9" y="580.9">0.21%</text>
<text x="2046.4" y="582.8">0.22%</text>
<text x="2049.6" y="585.3">0.33%</text>
<text x="2052.7" y="587.8">0.22%</text>
<text x="2055.1" y="589.9">0.22%</text>
<text x="2057.6" y="592.0">0.22%</text>
<text x="2060.0" y="594.2">0.22%</text>
<text x="2062.3" y="596.4">0.22%</text>
<text x="2064.7" y="598.6">0.22%</text>
<text x="2067.0" y="600.9">0.22%</text>
<text x="2069.4" y="603.2">0.23%</text>
<text x="2071.7" y="605.6">0.23%</text>
<text x="2074.0" y="608.1">0.23%</text>
<text x="2076.4" y="610.7">0.24%</text>
<text x="2078.7" y="613.3">0.24%</text>
<text x="2081.1" y="616.0">0.24%</text>
<text x="2083.4" y="618.8">0.25%</text>
<text x="2085.7" y="621.7">0.25%</text>
<text x="2088.0" y="624.6">0.26%</text>
<text x="2090.3" y="627.6">0.26%</text>
<text x="2092.6" y="630.7">0.27%</text>
<text x="2094.8" y="634.0">0.27%</text>
<text x="2097.1" y="637.3">0.27%</text>
<text x="2099.3" y="640.7">0.28%</text>
<text x="2101.5" y="644.1">0.28%</text>
<text x="2103.6" y="647.6">0.28%</text>
<text x="2105.7" y="651.1">0.28%</text>
<text x="2107.7" y="654.7">0.28%</text>
<text x="2109.6" y="658.3">0.28%</text>
<text x="2111.5" y="661.9">0.28%</text>
<text x="2113.3" y="665.6">0.28%</text>
<text x="2115.1" y="669.3">0.28%</text>
<text x="2116.8" y="673.0">0.28%</text>
<text x="2118.4" y="676.8">0.28%</text>
<text x="2120.0" y="680.7">0.28%</text>
<text x="2121.5" y="684.5">0.28%</text>
<text x="2122.9" y="688.4">0.28%</text>
<text x="2124.3" y="692.4">0.28%</text>
<text x="2125.6" y="696.4">0.29%</text>
<text x="2126.9" y="700.4">0.29%</text>
<text x="2128.1" y="704.6">0.29%</text>
<text x="2129.2" y="708.8">0.30%</text>
<text x="2130.3" y="713.0">0.30%</text>
<text x="2131.2" y="717.3">0.30%</text>
<text x="2132.2" y="721.7">0.30%</text>
<text x="2133.0" y="726.2">0.31%</text>
<text x="2133.8" y="730.6">0.31%</text>
<text x="2134.4" y="735.1">0.31%</text>
<text x="2135.0" y="739.6">0.31%</text>
<text x="2135.5" y="744.2">0.31%</text>
<text x="2135.9" y="748.8">0.32%</text>
<text x="2136.3" y="753.5">0.32%</text>
<text x="2136.5" y="758.2">0.32%</text>
<text x="2136.7" y="762.9">0.32%</text>
<text x="2136.7" y="767.6">0.32%</text>
<text x="2136.7" y="772.4">0.32%</text>
<text x="2136.5" y="777.2">0.33%</text>
<text x="2136.3" y="782.0">0.33%</text>
<text x="2135.9" y="786.8">0.33%</text>
<text x="2135.5" y="791.7">0.33%</text>
<text x="2134.9" y="796.6">0.34%</text>
<text x="2134.2" y="801.5">0.34%</text>
<text x="2133.5" y="806.5">0.34%</text>
<text x="2132.6" y="811.4">0.34%</text>
<text x="2131.6" y="816.4">0.35%</text>
<text x="2130.4" y="821.4">0.35%</text>
<text x="2129.2" y="826.4">0.35%</text>
<text x="2127.8" y="831.5">0.35%</text>
<text x="2126.3" y="836.5">0.36%</text>
<text x="2124.7" y="841.5">0.36%</text>
<text x="2123.0" y="846.6">0.36%</text>
<text x="2121.1" y="851.6">0.37%</text>
<text x="2119.1" y="856.6">0.37%</text>
<text x="2117.0" y="861.6">0.37%</text>
<text x="2114.8" y="866.6">0.37%</text>
<text x="2112.4" y="871.6">0.37%</text>
<text x="2109.9" y="876.5">0.38%</text>
<text x="2107.2" y="881.4">0.38%</text>
<text x="2104.5" y="886.2">0.38%</text>
<text x="2101.6" y="891.0">0.38%</text>
<text x="2098.5" y="895.8">0.39%</text>
<text x="2095.3" y="900.5">0.39%</text>
<text x="2092.0" y="905.2">0.39%</text>
<text x="2088.6" y="909.9">0.39%</text>
<text x="2085.0" y="914.5">0.40%</text>
<text x="2081.2" y="919.0">0.40%</text>
<text x="2077.3" y="923.5">0.40%</text>
<text x="2073.3" y="927.9">0.41%</text>
<text x="2069.2" y="932.2">0.41%</text>
<text x="2064.9" y="936.4">0.41%</text>
<text x="2060.4" y="940.6">0.42%</text>
<text x="2055.8" y="944.7">0.42%</text>
<text x="2051.1" y="948.7">0.42%</text>
<text x="2046.2" y="952.6">0.43%</text>
<text x="2041.2" y="956.4">0.43%</text>
<text x="2036.1" y="960.0">0.43%</text>
<text x="2030.9" y="963.5">0.43%</text>
<text x="2025.6" y="966.9">0.43%</text>
<text x="2020.2" y="970.1">0.43%</text>
<text x="2014.7" y="973.2">0.43%</text>
<text x="2009.1" y="976.2">0.43%</text>
<text x="2003.5" y="979.0">0.43%</text>
<text x="1997.7" y="981.7">0.43%</text>
<text x="1991.8" y="984.2">0.44%</text>
<text x="1985.8" y="986.5">0.44%</text>
<text x="1979.8" y="988.8">0.44%</text>
<text x="1973.6" y="990.8">0.44%</text>
<text x="1967.4" y="992.7">0.44%</text>
<text x="1961.1" y="994.4">0.45%</text>
<text x="1954.7" y="996.0">0.45%</text>
<text x="1948.2" y="997.4">0.45%</text>
<text x="1941.7" y="998.6">0.45%</text>
<text x="1935.1" y="999.6">0.46%</text>
<text x="1928.4" y="1000.5">0.46%</text>
<text x="1921.7" y="1001.1">0.46%</text>
<text x="1914.9" y="1001.6">0.46%</text>
<text x="1908.1" y="1001.8">0.46%</text>
<text x="1901.3" y="1001.9">0.46%</text>
<text x="1894.5" y="1001.8">0.47%</text>
<text x="1887.5" y="1001.4">0.48%</text>
<text x="1880.7" y="1000.9">0.46%</text>
<text x="1873.8" y="1000.1">0.48%</text>
<text x="1866.8" y="999.2">0.48%</text>
<text x="1859.9" y="998.0">0.48%</text>
<text x="1852.8" y="996.6">0.49%</text>
<text x="1845.9" y="995.0">0.47%</text>
<text x="1839.1" y="993.2">0.48%</text>
<text x="1832.4" y="991.2">0.47%</text>
<text x="1825.7" y="989.0">0.50%</text>
<text x="1818.8" y="986.5">0.49%</text>
<text x="1812.0" y="983.8">0.50%</text>
<text x="1805.2" y="980.8">0.51%</text>
<text x="1798.5" y="977.6">0.51%</text>
<text x="1792.1" y="974.3">0.47%</text>
<text x="1785.8" y="970.8">0.49%</text>
<text x="1779.5" y="967.1">0.51%</text>
<text x="1773.1" y="963.0">0.52%</text>
<text x="1766.9" y="958.8">0.49%</text>
<text x="1760.8" y="954.3">0.55%</text>
<text x="1752.5" y="947.6">0.90%</text>
<text x="1742.6" y="939.0">0.89%</text>
<text x="1735.4" y="931.9">0.49%</text>
<text x="1730.5" y="926.8">0.48%</text>
<text x="1725.7" y="921.4">0.50%</text>
<text x="1720.9" y="915.8">0.50%</text>
<text x="1716.2" y="909.9">0.52%</text>
<text x="1711.6" y="903.5">0.55%</text>
<text x="1707.0" y="896.9">0.54%</text>
<text x="1702.9" y="890.5">0.51%</text>
<text x="1699.0" y="883.8">0.54%</text>
<text x="1695.1" y="876.8">0.54%</text>
<text x="1691.5" y="869.7">0.54%</text>
<text x="1688.2" y="862.4">0.54%</text>
<text x="1685.1" y="855.2">0.53%</text>
<text x="1682.2" y="847.7">0.56%</text>
<text x="1679.7" y="840.4">0.50%</text>
<text x="1677.3" y="832.8">0.58%</text>
<text x="1675.2" y="824.8">0.54%</text>
<text x="1673.3" y="816.8">0.57%</text>
<text x="1671.7" y="808.8">0.55%</text>
<text x="1670.5" y="800.8">0.55%</text>
<text x="1669.4" y="792.6">0.57%</text>
<text x="1668.5" y="781.7">0.92%</text>
<text x="1668.1" y="771.0">0.54%</text>
<text x="1668.1" y="762.9">0.56%</text>
<text x="1668.5" y="754.6">0.56%</text>
<text x="1669.1" y="746.4">0.56%</text>
<text x="1670.0" y="738.1">0.57%</text>
<text x="1671.2" y="729.8">0.57%</text>
<text x="1672.7" y="721.6">0.57%</text>
<text x="1674.5" y="713.3">0.57%</text>
<text x="1676.6" y="705.1">0.58%</text>
<text x="1679.0" y="697.0">0.58%</text>
<text x="1681.7" y="688.8">0.58%</text>
<text x="1684.8" y="680.8">0.59%</text>
<text x="1688.1" y="672.8">0.59%</text>
<text x="1691.8" y="665.0">0.59%</text>
<text x="1695.7" y="657.2">0.59%</text>
<text x="1700.0" y="649.6">0.60%</text>
<text x="1704.6" y="642.1">0.60%</text>
<text x="1709.4" y="634.7">0.60%</text>
<text x="1714.6" y="627.5">0.60%</text>
<text x="1720.1" y="620.5">0.61%</text>
<text x="1725.8" y="613.6">0.61%</text>
<text x="1731.8" y="607.0">0.61%</text>
<text x="1738.2" y="600.5">0.61%</text>
<text x="1744.7" y="594.3">0.62%</text>
<text x="1751.7" y="588.2">0.63%</text>
<text x="1758.9" y="582.4">0.62%</text>
<text x="1766.4" y="576.8">0.66%</text>
<text x="1774.2" y="571.5">0.62%</text>
<text x="1782.0" y="566.6">0.62%</text>
<text x="1790.0" y="562.0">0.63%</text>
<text x="1798.1" y="557.8">0.62%</text>
<text x="1806.4" y="553.9">0.62%</text>
<text x="1814.9" y="550.3">0.64%</text>
<text x="1824.1" y="546.8">0.70%</text>
<text x="1842.4" y="541.1">1.92%</text>
<text x="1860.8" y="537.0">0.64%</text>
<text x="1870.1" y="535.5">0.63%</text>
<text x="1879.3" y="534.4">0.63%</text>
<text x="1888.6" y="533.7">0.64%</text>
<text x="1897.9" y="533.3">0.61%</text>
</g></svg>
<div class="hl" style="top:1218px"></div>
<div id="seg"><div style="left:0;width:127px"><span class="sx" style="transform:scaleX(1.12);-webkit-text-stroke:0.4px #98989f">Data</span></div><div style="left:127px;width:127px;background:#363638;color:#fff;font-weight:bold"><span class="sx" style="transform:scaleX(1.08)">Chart</span></div><div style="left:254px;width:126px"><span class="sx" style="transform:scaleX(1.1);-webkit-text-stroke:0.4px #98989f">Message</span></div></div>
<div id="sel"><span>Pie Chart</span></div>
<div class="btn" style="left:1225px;width:141px"><span class="sx" style="transform:scaleX(1.1);-webkit-text-stroke:0.4px #fff">Values</span></div>
<div class="btn" style="left:1661px;width:127px"><span class="sx" style="transform:scaleX(1.16);-webkit-text-stroke:0.4px #fff">Label</span></div>
<div class="btn" style="left:2084px;width:64px"></div>
<div class="btn" style="left:2156px;width:64px"></div>
<div class="btn" style="left:2228px;width:64px"></div>
<div class="btn" style="left:2300px;width:80px"><span class="sx" style="transform:scaleX(1.06)">Reset</span></div>
<svg class="abs" style="left:2084px;top:1236px" width="220" height="46" viewBox="2198 1314 220 46" fill="none">
<g fill="#fafafa">
<rect x="2221.9" y="1324.9" width="16.2" height="5.4"/>
<path d="M2216.5 1334.2Q2216.5 1331.5 2219.2 1331.5H2240.7Q2243.4 1331.5 2243.4 1334.2V1343.3H2216.5Z"/>
<rect x="2221.9" y="1340.3" width="16.2" height="9.7"/>
</g>
<rect x="2223.8" y="1341.6" width="12.4" height="6.2" fill="#454547"/><circle cx="2238.9" cy="1335.6" r="1.6" fill="#454547"/>
<g stroke="#fafafa" stroke-width="3" stroke-linecap="round" stroke-linejoin="round">
<path d="M2302 1325.7V1341.5M2295.3 1335L2302 1341.7L2308.7 1335"/><path d="M2290.5 1343.5V1345.2Q2290.5 1348.3 2293.6 1348.3H2310.4Q2313.5 1348.3 2313.5 1345.2V1343.5"/>
</g>
<path d="M2360.9 1331.5L2370.7 1325.8L2378.5 1331.5L2387.1 1325.8V1329.2L2378.5 1335.1L2370.7 1329.5L2360.9 1335.1Z" fill="#fafafa"/>
<rect x="2360.9" y="1338.8" width="26.2" height="3.2" fill="#fafafa"/><rect x="2360.9" y="1344.9" width="26.2" height="3.1" fill="#fafafa"/>
</svg>
</div>
</body></html>
